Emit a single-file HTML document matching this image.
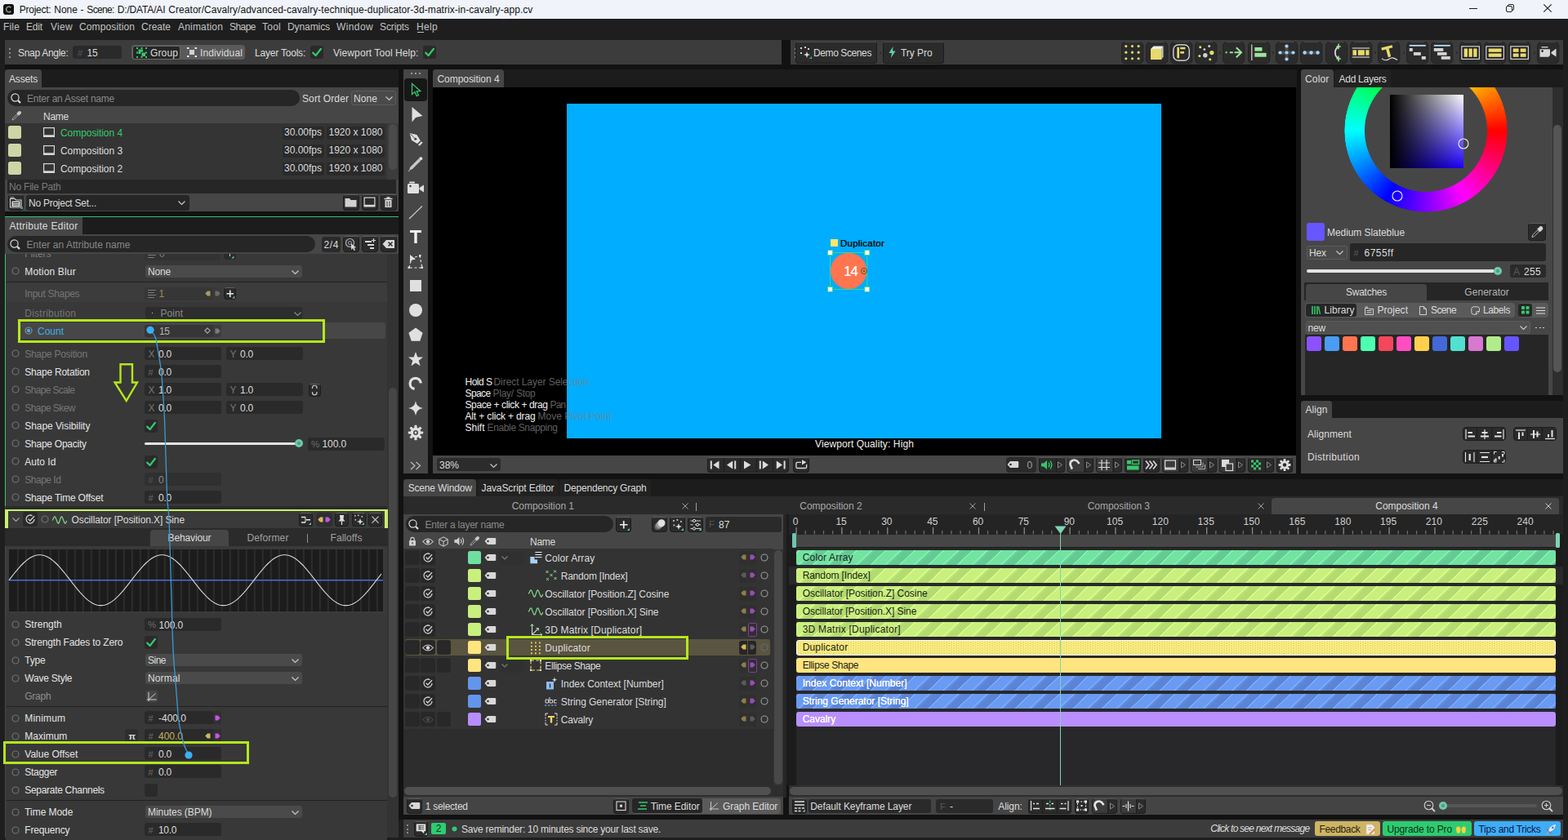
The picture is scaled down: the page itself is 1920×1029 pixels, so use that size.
<!DOCTYPE html>
<html lang="en"><head><meta charset="utf-8"><title>Cavalry</title>
<style>
html,body{margin:0;padding:0;}
body{width:1920px;height:1029px;overflow:hidden;background:#1e1e1e;font-family:"Liberation Sans",sans-serif;position:relative;}
div,svg{position:absolute;}
svg{overflow:visible;}
</style></head>
<body>
<div style="left:0px;top:0px;width:1920px;height:23px;background:#f0f3f9;"></div>
<div style="left:4px;top:5px;width:13px;height:13px;background:#111;border-radius:3px;"></div>
<svg style="left:4px;top:5px;" width="13" height="13" viewBox="0 0 13 13"><path d="M9.3 4.2 A3.3 3.3 0 1 0 9.3 8.8" fill="none" stroke="#aaa" stroke-width="1.3"/></svg>
<div style="left:0;top:0;width:700px;height:23px;">
<div style="left:23.8px;top:3.5px;height:16px;line-height:16px;font-size:12px;color:#111;white-space:nowrap;letter-spacing:-0.272px;">Project:</div>
<div style="left:66.3px;top:3.5px;height:16px;line-height:16px;font-size:12px;color:#111;white-space:nowrap;letter-spacing:-0.046px;">None</div>
<div style="left:98.4px;top:3.5px;height:16px;line-height:16px;font-size:12px;color:#111;white-space:nowrap;">-</div>
<div style="left:106.3px;top:3.5px;height:16px;line-height:16px;font-size:12px;color:#111;white-space:nowrap;letter-spacing:-0.643px;">Scene:</div>
<div style="left:143.8px;top:3.5px;height:16px;line-height:16px;font-size:12px;color:#111;white-space:nowrap;letter-spacing:-0.173px;">D:/DATA/AI</div>
<div style="left:206.3px;top:3.5px;height:16px;line-height:16px;font-size:12px;color:#111;white-space:nowrap;letter-spacing:0.048px;">Creator/Cavalry/advanced-cavalry-technique-duplicator-3d-matrix-in-cavalry-app.cv</div>
</div>
<svg style="left:1799px;top:10px;" width="10" height="1" viewBox="0 0 10 1"><rect x="0" y="0" width="10" height="1" fill="#1a1a1a"/></svg>
<svg style="left:1844px;top:5px;" width="10" height="10" viewBox="0 0 10 10"><rect x="0.5" y="2.5" width="7" height="7" rx="1.5" fill="none" stroke="#222" stroke-width="1"/><path d="M2.5 2.5 V2 A1.5 1.5 0 0 1 4 0.5 H8 A1.5 1.5 0 0 1 9.5 2 V6 A1.5 1.5 0 0 1 8 7.5 H7.5" fill="none" stroke="#222" stroke-width="1"/></svg>
<svg style="left:1890px;top:5px;" width="10" height="10" viewBox="0 0 10 10"><path d="M0.3 0.3 L9.7 9.7 M9.7 0.3 L0.3 9.7" stroke="#1a1a1a" stroke-width="1.1" fill="none"/></svg>
<div style="left:0px;top:23px;width:1920px;height:20px;background:#1e1e1e;"></div>
<div style="left:4px;top:25px;height:16px;line-height:16px;font-size:12px;color:#c4c4c4;white-space:nowrap;letter-spacing:0.166px;">File</div>
<div style="left:32px;top:25px;height:16px;line-height:16px;font-size:12px;color:#c4c4c4;white-space:nowrap;letter-spacing:-0.169px;">Edit</div>
<div style="left:62px;top:25px;height:16px;line-height:16px;font-size:12px;color:#c4c4c4;white-space:nowrap;letter-spacing:0.302px;">View</div>
<div style="left:97px;top:25px;height:16px;line-height:16px;font-size:12px;color:#c4c4c4;white-space:nowrap;letter-spacing:0.119px;">Composition</div>
<div style="left:173px;top:25px;height:16px;line-height:16px;font-size:12px;color:#c4c4c4;white-space:nowrap;letter-spacing:-0.003px;">Create</div>
<div style="left:218px;top:25px;height:16px;line-height:16px;font-size:12px;color:#c4c4c4;white-space:nowrap;letter-spacing:0.182px;">Animation</div>
<div style="left:281px;top:25px;height:16px;line-height:16px;font-size:12px;color:#c4c4c4;white-space:nowrap;letter-spacing:-0.539px;">Shape</div>
<div style="left:321px;top:25px;height:16px;line-height:16px;font-size:12px;color:#c4c4c4;white-space:nowrap;letter-spacing:0.247px;">Tool</div>
<div style="left:352px;top:25px;height:16px;line-height:16px;font-size:12px;color:#c4c4c4;white-space:nowrap;letter-spacing:-0.084px;">Dynamics</div>
<div style="left:412px;top:25px;height:16px;line-height:16px;font-size:12px;color:#c4c4c4;white-space:nowrap;letter-spacing:0.387px;">Window</div>
<div style="left:465px;top:25px;height:16px;line-height:16px;font-size:12px;color:#c4c4c4;white-space:nowrap;letter-spacing:-0.096px;">Scripts</div>
<div style="left:510px;top:25px;height:16px;line-height:16px;font-size:12px;color:#c4c4c4;white-space:nowrap;letter-spacing:0.330px;">Help</div>
<div style="left:510.5px;top:39.3px;width:8px;height:1px;background:#c4c4c4;"></div>
<div style="left:0px;top:43px;width:1920px;height:6px;background:#1e1e1e;"></div>
<div style="left:957px;top:49px;width:11px;height:30px;background:#121212;"></div>
<div style="left:6px;top:49px;width:951px;height:30px;background:#3c3c3c;"></div>
<div style="left:968px;top:49px;width:946px;height:30px;background:#3c3c3c;"></div>
<div style="left:6px;top:79px;width:1908px;height:925px;background:#121212;"></div>
<div style="left:6px;top:85px;width:482px;height:22px;background:#1c1c1c;"></div>
<div style="left:530px;top:85px;width:1057.5px;height:22px;background:#1c1c1c;"></div>
<div style="left:1593px;top:85px;width:321px;height:22px;background:#1c1c1c;"></div>
<div style="left:6px;top:266px;width:482px;height:21px;background:#1c1c1c;"></div>
<div style="left:1593px;top:490.5px;width:321px;height:21.5px;background:#1c1c1c;"></div>
<div style="left:494px;top:586.5px;width:1420px;height:21.5px;background:#1c1c1c;"></div>
<div style="left:10.5px;top:59px;width:2px;height:2px;background:#8a8a8a;"></div>
<div style="left:973px;top:58.5px;width:2px;height:2px;background:#8a8a8a;"></div>
<div style="left:10.5px;top:64px;width:2px;height:2px;background:#8a8a8a;"></div>
<div style="left:973px;top:63.5px;width:2px;height:2px;background:#8a8a8a;"></div>
<div style="left:10.5px;top:69px;width:2px;height:2px;background:#8a8a8a;"></div>
<div style="left:973px;top:68.5px;width:2px;height:2px;background:#8a8a8a;"></div>
<div style="left:22px;top:56.5px;height:16px;line-height:16px;font-size:12px;color:#dcdcdc;white-space:nowrap;letter-spacing:-0.293px;">Snap Angle:</div>
<div style="left:89px;top:56px;width:60px;height:16px;background:#2a2a2a;border-radius:3px;"></div>
<div style="left:95px;top:57.5px;height:14px;line-height:14px;font-size:11px;color:#5a5a5a;white-space:nowrap;">#</div>
<div style="left:106.5px;top:56.5px;height:16px;line-height:16px;font-size:12px;color:#dcdcdc;white-space:nowrap;letter-spacing:-0.173px;">15</div>
<div style="left:161px;top:55px;width:139px;height:18px;background:#5a5a5a;border-radius:4px;"></div>
<div style="left:161.5px;top:55.5px;width:59px;height:17px;background:#262626;border-radius:3px;border:1px solid #6a6a6a;box-sizing:border-box;"></div>
<svg style="left:167px;top:58px;" width="13" height="13" viewBox="0 0 13 13"><rect x="2.5" y="2.5" width="5.5" height="5.5" fill="#35c96b"/><rect x="6" y="6" width="5.5" height="5.5" fill="#35c96b" stroke="#262626" stroke-width="1"/><g fill="#35c96b"><rect x="0" y="0" width="2" height="2"/><rect x="5.5" y="0" width="2" height="2"/><rect x="11" y="0" width="2" height="2"/><rect x="0" y="11" width="2" height="2"/><rect x="5.5" y="11" width="2" height="2"/><rect x="11" y="11" width="2" height="2"/><rect x="0" y="5.5" width="2" height="2"/><rect x="11" y="5.5" width="2" height="2"/></g></svg>
<div style="left:184px;top:56.5px;height:16px;line-height:16px;font-size:12px;color:#dcdcdc;white-space:nowrap;letter-spacing:0.130px;">Group</div>
<svg style="left:229px;top:58px;" width="12" height="12" viewBox="0 0 12 12"><rect x="3" y="3" width="6" height="6" fill="#d0d0d0"/><g fill="#e8e8e8"><rect x="0" y="0" width="2.5" height="2"/><rect x="9.5" y="0" width="2.5" height="2"/><rect x="0" y="10" width="2.5" height="2"/><rect x="9.5" y="10" width="2.5" height="2"/></g></svg>
<div style="left:245px;top:56.5px;height:16px;line-height:16px;font-size:12px;color:#dcdcdc;white-space:nowrap;letter-spacing:0.130px;">Individual</div>
<div style="left:312px;top:56.5px;height:16px;line-height:16px;font-size:12px;color:#dcdcdc;white-space:nowrap;letter-spacing:-0.206px;">Layer Tools:</div>
<div style="left:380px;top:56px;width:16px;height:16px;background:#2a2a2a;border-radius:3px;"></div>
<svg style="left:380px;top:56px;" width="16" height="16" viewBox="0 0 16 16"><path d="M3.2 8.6 L6.6 12 L13 3.8" fill="none" stroke="#35c96b" stroke-width="2.2" stroke-linecap="round" stroke-linejoin="round"/></svg>
<div style="left:408px;top:56.5px;height:16px;line-height:16px;font-size:12px;color:#dcdcdc;white-space:nowrap;letter-spacing:0.082px;">Viewport Tool Help:</div>
<div style="left:518px;top:56px;width:16px;height:16px;background:#2a2a2a;border-radius:3px;"></div>
<svg style="left:518px;top:56px;" width="16" height="16" viewBox="0 0 16 16"><path d="M3.2 8.6 L6.6 12 L13 3.8" fill="none" stroke="#35c96b" stroke-width="2.2" stroke-linecap="round" stroke-linejoin="round"/></svg>
<div style="left:974px;top:51px;width:100px;height:27px;background:#2b2b2b;border-radius:4px;border:1px solid #1c1c1c;box-sizing:border-box;border-top-color:#4a4a4a;"></div>
<svg style="left:979px;top:57px;" width="15" height="15" viewBox="0 0 15 15"><path d="M9 6 L10 9 L13 10 L10 11 L9 14 L8 11 L5 10 L8 9 Z" fill="#e0e0e0"/><g fill="#d0d0d0"><rect x="1" y="1" width="2" height="2"/><rect x="6" y="0" width="2" height="2"/><rect x="10" y="2" width="2" height="2"/><rect x="1" y="7" width="2" height="2"/></g><path d="M15 12 V15 H12 Z" fill="#35c96b"/></svg>
<div style="left:996px;top:56.5px;height:16px;line-height:16px;font-size:12px;color:#dcdcdc;white-space:nowrap;letter-spacing:-0.397px;">Demo Scenes</div>
<div style="left:1077px;top:63.5px;width:2px;height:2px;background:#2a2a2a;"></div>
<div style="left:1081px;top:51px;width:75px;height:27px;background:#2b2b2b;border-radius:4px;border:1px solid #1c1c1c;box-sizing:border-box;border-top-color:#4a4a4a;"></div>
<svg style="left:1088px;top:57px;" width="9" height="14" viewBox="0 0 9 14"><path d="M5.5 0 L0.5 8 H4 L3 14 L8.5 5.5 H5 Z" fill="#62d3a4"/></svg>
<div style="left:1103px;top:56.5px;height:16px;line-height:16px;font-size:12px;color:#dcdcdc;white-space:nowrap;letter-spacing:-0.055px;">Try Pro</div>
<svg style="left:1372.5px;top:50.5px;" width="27" height="27" viewBox="0 0 27 27"><rect x="0.5" y="0.5" width="26.3" height="26.3" rx="4.5" fill="#2b2b2b" stroke="#232323" stroke-width="1"/><path d="M4.5 0.6 H22.5" stroke="#4a4a4a" stroke-width="1"/><circle cx="5.8" cy="5.6" r="1.55" fill="#e8d96c"/><circle cx="5.8" cy="13.149999999999999" r="1.55" fill="#e8d96c"/><circle cx="5.8" cy="20.7" r="1.55" fill="#e8d96c"/><circle cx="13.45" cy="5.6" r="1.55" fill="#e8d96c"/><circle cx="13.45" cy="13.149999999999999" r="1.55" fill="#e8d96c"/><circle cx="13.45" cy="20.7" r="1.55" fill="#e8d96c"/><circle cx="21.1" cy="5.6" r="1.55" fill="#e8d96c"/><circle cx="21.1" cy="13.149999999999999" r="1.55" fill="#e8d96c"/><circle cx="21.1" cy="20.7" r="1.55" fill="#e8d96c"/></svg>
<svg style="left:1402.5px;top:50.5px;" width="27" height="27" viewBox="0 0 27 27"><rect x="0.5" y="0.5" width="26.3" height="26.3" rx="4.5" fill="#2b2b2b" stroke="#232323" stroke-width="1"/><path d="M4.5 0.6 H22.5" stroke="#4a4a4a" stroke-width="1"/><path d="M6 9 L9.5 5.5 H21.5 L19.2 9 Z" fill="#ececec"/><path d="M19.2 9 L21.5 5.5 V18.5 L19.2 22 Z" fill="#c4c4c4"/><rect x="6" y="9" width="13.2" height="13" fill="#e8d96c"/></svg>
<svg style="left:1432.5px;top:50.5px;" width="27" height="27" viewBox="0 0 27 27"><rect x="0.5" y="0.5" width="26.3" height="26.3" rx="4.5" fill="#2b2b2b" stroke="#232323" stroke-width="1"/><path d="M4.5 0.6 H22.5" stroke="#4a4a4a" stroke-width="1"/><rect x="3.8" y="3.8" width="19.4" height="19.4" rx="6" fill="none" stroke="#ececec" stroke-width="1.2"/><rect x="8.3" y="6.8" width="2.7" height="13.4" fill="#e8d96c"/><rect x="12.2" y="6.8" width="6.2" height="2.5" fill="#e8d96c"/><rect x="12.2" y="12" width="4.8" height="2.6" fill="#e8d96c"/></svg>
<svg style="left:1462.5px;top:50.5px;" width="27" height="27" viewBox="0 0 27 27"><rect x="0.5" y="0.5" width="26.3" height="26.3" rx="4.5" fill="#2b2b2b" stroke="#232323" stroke-width="1"/><path d="M4.5 0.6 H22.5" stroke="#4a4a4a" stroke-width="1"/><circle cx="6.7" cy="6.7" r="1.5" fill="#e8d96c"/><circle cx="17.6" cy="5.6" r="1.5" fill="#d0d0d0"/><circle cx="11.8" cy="9.6" r="1.4" fill="#d0d0d0"/><circle cx="20.8" cy="13.6" r="2.6" fill="#e8d96c"/><circle cx="12.8" cy="16.8" r="2.7" fill="#d0d0d0"/><circle cx="5.8" cy="17.6" r="1.5" fill="#e8d96c"/><circle cx="18.7" cy="21.7" r="1.5" fill="#e8d96c"/></svg>
<svg style="left:1497px;top:50.5px;" width="27" height="27" viewBox="0 0 27 27"><rect x="0.5" y="0.5" width="26.3" height="26.3" rx="4.5" fill="#2b2b2b" stroke="#232323" stroke-width="1"/><path d="M4.5 0.6 H22.5" stroke="#4a4a4a" stroke-width="1"/><path d="M3.6 13.3 H5.6 M8.8 13.3 H12.8 M14.6 13.3 H22.5" fill="none" stroke="#9fe49a" stroke-width="2"/><path d="M16.8 7.3 L23 13.3 L16.8 19.3" fill="none" stroke="#9fe49a" stroke-width="2"/></svg>
<svg style="left:1527.5px;top:50.5px;" width="27" height="27" viewBox="0 0 27 27"><rect x="0.5" y="0.5" width="26.3" height="26.3" rx="4.5" fill="#2b2b2b" stroke="#232323" stroke-width="1"/><path d="M4.5 0.6 H22.5" stroke="#4a4a4a" stroke-width="1"/><path d="M4.8 3.5 V23" stroke="#e8e8e8" stroke-width="1.1"/><rect x="8.3" y="7" width="9.2" height="4.6" fill="#9fe49a"/><rect x="8.3" y="13.8" width="14.3" height="4.9" fill="#9fe49a"/></svg>
<svg style="left:1562px;top:50.5px;" width="27" height="27" viewBox="0 0 27 27"><rect x="0.5" y="0.5" width="26.3" height="26.3" rx="4.5" fill="#2b2b2b" stroke="#232323" stroke-width="1"/><path d="M4.5 0.6 H22.5" stroke="#4a4a4a" stroke-width="1"/><path d="M13.5 5.5 V21.5 M5.5 13.5 H21.5" stroke="#4c4c4c" stroke-width="4" stroke-linecap="round"/><circle cx="13.5" cy="5.5" r="2.1" fill="#a4d4ff"/><circle cx="13.5" cy="21.5" r="2.1" fill="#a4d4ff"/><circle cx="5.5" cy="13.5" r="2.1" fill="#a4d4ff"/><circle cx="21.5" cy="13.5" r="2.1" fill="#a4d4ff"/><circle cx="13.5" cy="13.5" r="2.1" fill="#a4d4ff"/></svg>
<svg style="left:1592px;top:50.5px;" width="27" height="27" viewBox="0 0 27 27"><rect x="0.5" y="0.5" width="26.3" height="26.3" rx="4.5" fill="#2b2b2b" stroke="#232323" stroke-width="1"/><path d="M4.5 0.6 H22.5" stroke="#4a4a4a" stroke-width="1"/><path d="M5.5 13.5 H21.5" stroke="#4c4c4c" stroke-width="4" stroke-linecap="round"/><circle cx="5.6" cy="13.5" r="2.2" fill="#a4d4ff"/><circle cx="13.5" cy="13.5" r="2.2" fill="#a4d4ff"/><circle cx="21.6" cy="13.5" r="2.2" fill="#a4d4ff"/></svg>
<svg style="left:1622.5px;top:50.5px;" width="27" height="27" viewBox="0 0 27 27"><rect x="0.5" y="0.5" width="26.3" height="26.3" rx="4.5" fill="#2b2b2b" stroke="#232323" stroke-width="1"/><path d="M4.5 0.6 H22.5" stroke="#4a4a4a" stroke-width="1"/><path d="M16.5 6 A8.4 8.4 0 0 0 16.5 21" fill="none" stroke="#e0e0e0" stroke-width="1.7"/><path d="M16 2.6 V9.2 M13.4 5.9 H18.8 M16 17.6 V24.2 M13.4 20.9 H18.8" stroke="#9fe49a" stroke-width="1.5"/></svg>
<svg style="left:1652.5px;top:50.5px;" width="27" height="27" viewBox="0 0 27 27"><rect x="0.5" y="0.5" width="26.3" height="26.3" rx="4.5" fill="#2b2b2b" stroke="#232323" stroke-width="1"/><path d="M4.5 0.6 H22.5" stroke="#4a4a4a" stroke-width="1"/><path d="M2.8 8 H24 M2.8 19 H24" stroke="#f0f0f0" stroke-width="1"/><rect x="3.4" y="10.3" width="4.6" height="6.4" fill="#e8d96c"/><rect x="9.8" y="10.3" width="8" height="6.4" fill="#e8d96c"/><rect x="19.3" y="10.3" width="4.2" height="6.4" fill="#e8d96c"/></svg>
<svg style="left:1687px;top:50.5px;" width="27" height="27" viewBox="0 0 27 27"><rect x="0.5" y="0.5" width="26.3" height="26.3" rx="4.5" fill="#2b2b2b" stroke="#232323" stroke-width="1"/><path d="M4.5 0.6 H22.5" stroke="#4a4a4a" stroke-width="1"/><path d="M4.3 7.6 L17.6 4.2 L18.4 7.2 L13.6 8.5 L16.2 18.3 L12.8 19.2 L10.2 9.4 L5.1 10.7 Z" fill="#e8d96c"/><path d="M5 20.6 Q9.5 24.5 14 21.2 T24 22.5" fill="none" stroke="#e0e0e0" stroke-width="1.1"/></svg>
<svg style="left:1722px;top:50.5px;" width="27" height="27" viewBox="0 0 27 27"><rect x="0.5" y="0.5" width="26.3" height="26.3" rx="4.5" fill="#2b2b2b" stroke="#232323" stroke-width="1"/><path d="M4.5 0.6 H22.5" stroke="#4a4a4a" stroke-width="1"/><path d="M3.8 4.8 H23.8" stroke="#b4e0ff" stroke-width="1.8"/><rect x="3.8" y="8" width="4" height="3.8" fill="#d4d4d4"/><rect x="9" y="13" width="8.8" height="3.8" fill="#d4d4d4"/><rect x="18.8" y="18" width="5" height="3.8" fill="#d4d4d4"/></svg>
<svg style="left:1752px;top:50.5px;" width="27" height="27" viewBox="0 0 27 27"><rect x="0.5" y="0.5" width="26.3" height="26.3" rx="4.5" fill="#2b2b2b" stroke="#232323" stroke-width="1"/><path d="M4.5 0.6 H22.5" stroke="#4a4a4a" stroke-width="1"/><path d="M3.8 4.8 H23.8" stroke="#b4e0ff" stroke-width="1.8"/><rect x="3.8" y="8" width="11.5" height="3.8" fill="#d4d4d4"/><rect x="8" y="13" width="11.5" height="3.8" fill="#d4d4d4"/><rect x="12.8" y="18" width="11" height="3.8" fill="#d4d4d4"/></svg>
<svg style="left:1787px;top:50.5px;" width="27" height="27" viewBox="0 0 27 27"><rect x="0.5" y="0.5" width="26.3" height="26.3" rx="4.5" fill="#2b2b2b" stroke="#232323" stroke-width="1"/><path d="M4.5 0.6 H22.5" stroke="#4a4a4a" stroke-width="1"/><rect x="2.9" y="5.9" width="21.4" height="15.4" fill="#17171f" stroke="#ececec" stroke-width="1.1"/><rect x="5.6" y="8.4" width="4.4" height="10.4" fill="#e8d96c"/><rect x="11.4" y="8.4" width="4.4" height="10.4" fill="#e8d96c"/><rect x="17.2" y="8.4" width="4.4" height="10.4" fill="#e8d96c"/></svg>
<svg style="left:1817px;top:50.5px;" width="27" height="27" viewBox="0 0 27 27"><rect x="0.5" y="0.5" width="26.3" height="26.3" rx="4.5" fill="#2b2b2b" stroke="#232323" stroke-width="1"/><path d="M4.5 0.6 H22.5" stroke="#4a4a4a" stroke-width="1"/><rect x="2.9" y="5.9" width="21.4" height="15.4" fill="#17171f" stroke="#ececec" stroke-width="1.1"/><rect x="5.6" y="8.4" width="16" height="4.4" fill="#e8d96c"/><rect x="5.6" y="14.4" width="16" height="4.4" fill="#e8d96c"/></svg>
<svg style="left:1847px;top:50.5px;" width="27" height="27" viewBox="0 0 27 27"><rect x="0.5" y="0.5" width="26.3" height="26.3" rx="4.5" fill="#2b2b2b" stroke="#232323" stroke-width="1"/><path d="M4.5 0.6 H22.5" stroke="#4a4a4a" stroke-width="1"/><rect x="2.9" y="5.9" width="21.4" height="15.4" fill="#17171f" stroke="#ececec" stroke-width="1.1"/><rect x="5.6" y="8.4" width="7" height="4.4" fill="#e8d96c"/><rect x="14.6" y="8.4" width="7" height="4.4" fill="#e8d96c"/><rect x="5.6" y="14.4" width="7" height="4.4" fill="#e8d96c"/><rect x="14.6" y="14.4" width="7" height="4.4" fill="#e8d96c"/></svg>
<svg style="left:1882px;top:50.5px;" width="27" height="27" viewBox="0 0 27 27"><rect x="0.5" y="0.5" width="26.3" height="26.3" rx="4.5" fill="#2b2b2b" stroke="#232323" stroke-width="1"/><path d="M4.5 0.6 H22.5" stroke="#4a4a4a" stroke-width="1"/><path d="M3.5 9.2 H16 V16.5 L14.2 18.8 H3.5 Z" fill="#d6d6d6"/><rect x="5.5" y="6.2" width="8" height="1.2" fill="#e8e8e8"/><path d="M17.5 13 L23.5 8.5 V18.5 L17.5 14.6 Z" fill="#d6d6d6"/><circle cx="6.6" cy="11.6" r="1.3" fill="#222"/></svg>
<div style="left:1493.1px;top:63.2px;width:2.4px;height:2.4px;background:#2a2a2a;border-radius:1.2px;"></div>
<div style="left:1558px;top:63.2px;width:2.4px;height:2.4px;background:#2a2a2a;border-radius:1.2px;"></div>
<div style="left:1682.9px;top:63.2px;width:2.4px;height:2.4px;background:#2a2a2a;border-radius:1.2px;"></div>
<div style="left:1717.7px;top:63.2px;width:2.4px;height:2.4px;background:#2a2a2a;border-radius:1.2px;"></div>
<div style="left:1782.7px;top:63.2px;width:2.4px;height:2.4px;background:#2a2a2a;border-radius:1.2px;"></div>
<div style="left:1877.9px;top:63.2px;width:2.4px;height:2.4px;background:#2a2a2a;border-radius:1.2px;"></div>
<div style="left:6px;top:85px;width:45px;height:22px;background:#464646;border-radius:4px 4px 0 0;"></div>
<div style="left:11px;top:89px;height:16px;line-height:16px;font-size:12px;color:#dcdcdc;white-space:nowrap;letter-spacing:-0.169px;">Assets</div>
<div style="left:6px;top:107px;width:482px;height:152px;background:#464646;"></div>
<div style="left:9px;top:110px;width:358px;height:20px;background:#262626;border-radius:10px;"></div>
<svg style="left:12.5px;top:113.5px;" width="14" height="14" viewBox="0 0 14 14"><circle cx="5.5" cy="5.5" r="4.6" fill="none" stroke="#d8d8d8" stroke-width="1.2"/><path d="M9.6 9.6 L11.4 11.4" stroke="#d8d8d8" stroke-width="2.2" stroke-linecap="round"/></svg>
<div style="left:33px;top:112.5px;height:16px;line-height:16px;font-size:12px;color:#888;white-space:nowrap;letter-spacing:-0.231px;">Enter an Asset name</div>
<div style="left:370px;top:113px;height:16px;line-height:16px;font-size:12px;color:#dcdcdc;white-space:nowrap;letter-spacing:0.099px;">Sort Order</div>
<div style="left:430px;top:111px;width:55px;height:18px;background:#4a4a4a;border-radius:3px;border:1px solid #5c5c5c;box-sizing:border-box;"></div>
<div style="left:433px;top:112.5px;height:16px;line-height:16px;font-size:12px;color:#dcdcdc;white-space:nowrap;letter-spacing:0.079px;">None</div>
<svg style="left:471.5px;top:118px;" width="9" height="5" viewBox="0 0 9 5"><path d="M0.5 0.5 L4.5 4.5 L8.5 0.5" fill="none" stroke="#c8c8c8" stroke-width="1.2"/></svg>
<div style="left:6px;top:131px;width:482px;height:20px;background:#464646;"></div>
<svg style="left:14px;top:136px;" width="12" height="12" viewBox="0 0 12 12"><path d="M1 11 L1.6 9 L6.5 4.1 L7.9 5.5 L3 10.4 Z" fill="none" stroke="#a8a8a8" stroke-width="1"/><path d="M6.2 3 L9 5.8 L10 4.8 L11.4 3.4 A1.7 1.7 0 0 0 8.6 0.6 L7.2 2 Z" fill="#c8c8c8"/></svg>
<div style="left:53px;top:135px;height:16px;line-height:16px;font-size:12px;color:#dcdcdc;white-space:nowrap;letter-spacing:-0.252px;">Name</div>
<div style="left:6px;top:151px;width:468px;height:69px;background:#343434;"></div>
<div style="left:10px;top:154px;width:16px;height:16px;background:#cdd6a4;border-radius:2.5px;"></div>
<svg style="left:53px;top:156px;" width="14" height="12" viewBox="0 0 14 12"><rect x="0.6" y="0.6" width="12.8" height="9.3" fill="none" stroke="#d8d8d8" stroke-width="1.2"/><rect x="0" y="10" width="14" height="2" fill="#d8d8d8"/></svg>
<div style="left:74px;top:154.5px;height:16px;line-height:16px;font-size:12px;color:#35c96b;white-space:nowrap;letter-spacing:-0.054px;">Composition 4</div>
<div style="left:346px;top:154.5px;width:51px;height:16px;background:#2a2a2a;border-radius:3px;"></div>
<div style="left:348px;top:154px;height:16px;line-height:16px;font-size:12px;color:#dcdcdc;white-space:nowrap;letter-spacing:-0.004px;">30.00fps</div>
<div style="left:399.5px;top:154.5px;width:71.5px;height:16px;background:#2a2a2a;border-radius:3px;"></div>
<div style="left:402.5px;top:154px;height:16px;line-height:16px;font-size:12px;color:#dcdcdc;white-space:nowrap;letter-spacing:-0.005px;">1920 x 1080</div>
<div style="left:10px;top:176px;width:16px;height:16px;background:#cdd6a4;border-radius:2.5px;"></div>
<svg style="left:53px;top:178px;" width="14" height="12" viewBox="0 0 14 12"><rect x="0.6" y="0.6" width="12.8" height="9.3" fill="none" stroke="#d8d8d8" stroke-width="1.2"/><rect x="0" y="10" width="14" height="2" fill="#d8d8d8"/></svg>
<div style="left:74px;top:176.5px;height:16px;line-height:16px;font-size:12px;color:#dcdcdc;white-space:nowrap;letter-spacing:-0.054px;">Composition 3</div>
<div style="left:346px;top:176.5px;width:51px;height:16px;background:#2a2a2a;border-radius:3px;"></div>
<div style="left:348px;top:176px;height:16px;line-height:16px;font-size:12px;color:#dcdcdc;white-space:nowrap;letter-spacing:-0.004px;">30.00fps</div>
<div style="left:399.5px;top:176.5px;width:71.5px;height:16px;background:#2a2a2a;border-radius:3px;"></div>
<div style="left:402.5px;top:176px;height:16px;line-height:16px;font-size:12px;color:#dcdcdc;white-space:nowrap;letter-spacing:-0.005px;">1920 x 1080</div>
<div style="left:10px;top:198px;width:16px;height:16px;background:#cdd6a4;border-radius:2.5px;"></div>
<svg style="left:53px;top:200px;" width="14" height="12" viewBox="0 0 14 12"><rect x="0.6" y="0.6" width="12.8" height="9.3" fill="none" stroke="#d8d8d8" stroke-width="1.2"/><rect x="0" y="10" width="14" height="2" fill="#d8d8d8"/></svg>
<div style="left:74px;top:198.5px;height:16px;line-height:16px;font-size:12px;color:#dcdcdc;white-space:nowrap;letter-spacing:-0.054px;">Composition 2</div>
<div style="left:346px;top:198.5px;width:51px;height:16px;background:#2a2a2a;border-radius:3px;"></div>
<div style="left:348px;top:198px;height:16px;line-height:16px;font-size:12px;color:#dcdcdc;white-space:nowrap;letter-spacing:-0.004px;">30.00fps</div>
<div style="left:399.5px;top:198.5px;width:71.5px;height:16px;background:#2a2a2a;border-radius:3px;"></div>
<div style="left:402.5px;top:198px;height:16px;line-height:16px;font-size:12px;color:#dcdcdc;white-space:nowrap;letter-spacing:-0.005px;">1920 x 1080</div>
<div style="left:474px;top:151px;width:14px;height:69px;background:#3c3c3c;"></div>
<div style="left:476px;top:152px;width:10px;height:56px;background:#4b4b4b;border-radius:5px;"></div>
<div style="left:9px;top:220px;width:476px;height:16.5px;background:#262626;"></div>
<div style="left:11px;top:220.5px;height:16px;line-height:16px;font-size:12px;color:#7c7c7c;white-space:nowrap;letter-spacing:-0.211px;">No File Path</div>
<div style="left:9.5px;top:238px;width:19.5px;height:20px;background:#2b2b2b;border-radius:4px;border:1px solid #1d1d1d;box-sizing:border-box;border-top-color:#5e5e5e;"></div>
<svg style="left:9.5px;top:238px;" width="19.5" height="20" viewBox="0 0 19.5 20"><path d="M2.5 5.5 H8 L9.5 7 H16 V16 H2.5 Z M2.5 4 H7.5" fill="none" stroke="#d8d8d8" stroke-width="1.1"/><rect x="4.5" y="8.5" width="10" height="6.5" fill="#d8d8d8"/><path d="M6 10.5 H13 M6 13 H13" stroke="#2b2b2b" stroke-width="1"/><path d="M18 15 V18 H15 Z" fill="#35c96b"/></svg>
<div style="left:32px;top:239px;width:200px;height:18.5px;background:#262626;border-radius:3px;"></div>
<div style="left:35px;top:240.5px;height:16px;line-height:16px;font-size:12px;color:#dcdcdc;white-space:nowrap;letter-spacing:-0.257px;">No Project Set...</div>
<svg style="left:218px;top:246px;" width="9" height="5" viewBox="0 0 9 5"><path d="M0.5 0.5 L4.5 4.5 L8.5 0.5" fill="none" stroke="#c8c8c8" stroke-width="1.2"/></svg>
<div style="left:420px;top:238px;width:20px;height:20px;background:#2b2b2b;border-radius:4px;border:1px solid #1d1d1d;box-sizing:border-box;border-top-color:#5e5e5e;"></div>
<svg style="left:420px;top:238px;" width="20" height="20" viewBox="0 0 20 20"><path d="M2.5 5 H8 L9.5 7 H16.5 V15.5 H2.5 Z" fill="#d0d0d0"/></svg>
<div style="left:443px;top:238px;width:20px;height:20px;background:#2b2b2b;border-radius:4px;border:1px solid #1d1d1d;box-sizing:border-box;border-top-color:#5e5e5e;"></div>
<svg style="left:443px;top:238px;" width="20" height="20" viewBox="0 0 20 20"><rect x="3.1" y="4.1" width="12.8" height="9.3" fill="none" stroke="#d8d8d8" stroke-width="1.2"/><rect x="2.5" y="13.5" width="14" height="2" fill="#d8d8d8"/></svg>
<div style="left:465.5px;top:238px;width:20px;height:20px;background:#2b2b2b;border-radius:4px;border:1px solid #1d1d1d;box-sizing:border-box;border-top-color:#5e5e5e;"></div>
<svg style="left:465.5px;top:238px;" width="20" height="20" viewBox="0 0 20 20"><path d="M4.5 5.5 H14.5 M7.5 4 H11.5" stroke="#d8d8d8" stroke-width="1.4" fill="none"/><path d="M5.5 7 H13.5 V16 H5.5 Z" fill="#d8d8d8"/><path d="M8 8.5 V15 M11 8.5 V15" stroke="#2b2b2b" stroke-width="1"/></svg>
<div style="left:494px;top:85px;width:30px;height:495px;background:#464646;"></div>
<div style="left:503px;top:89px;width:2px;height:2px;background:#9a9a9a;"></div>
<div style="left:508px;top:89px;width:2px;height:2px;background:#9a9a9a;"></div>
<div style="left:513px;top:89px;width:2px;height:2px;background:#9a9a9a;"></div>
<div style="left:495px;top:96px;width:28px;height:28px;background:#171717;border-radius:4px;"></div>
<svg style="left:499px;top:100px;" width="20" height="20" viewBox="0 0 20 20"><path d="M5.5 2.5 L5.5 15.5 L9 12.6 L11.2 17.6 L13.4 16.6 L11.2 11.8 L15.8 11.4 Z" fill="none" stroke="#35c96b" stroke-width="1.3" stroke-linejoin="miter"/></svg>
<svg style="left:499px;top:130px;" width="20" height="20" viewBox="0 0 20 20"><path d="M5.5 1 L5.5 19.5 L10 14 L18.5 12 Z" fill="#e0e0e0"/></svg>
<svg style="left:499px;top:160px;" width="20" height="20" viewBox="0 0 20 20"><path d="M2.5 3 L11.5 5.2 L15.8 12.2 L12 16 L5 11.8 Z" fill="#e0e0e0"/><path d="M3 3.5 L9.3 9.8" stroke="#464646" stroke-width="1"/><circle cx="9.8" cy="10.3" r="1.5" fill="#464646"/><path d="M13 17.2 L17 13.2 L18.6 14.8 L14.6 18.8 Z" fill="#e0e0e0"/></svg>
<svg style="left:499px;top:190px;" width="20" height="20" viewBox="0 0 20 20"><path d="M2 18.5 L3.3 14.7 L13.8 4.2 L16.3 6.7 L5.8 17.2 Z" fill="#c8c8c8"/><circle cx="16.3" cy="4.2" r="2" fill="#e0e0e0"/><path d="M1.2 19.5 L2.8 18.8" stroke="#e0e0e0" stroke-width="1"/></svg>
<svg style="left:498px;top:220px;" width="22" height="20" viewBox="0 0 22 20"><rect x="1" y="5" width="14" height="12" rx="1.5" fill="#e0e0e0"/><rect x="3" y="2.5" width="7" height="2" rx="1" fill="#e0e0e0"/><path d="M15.5 10 L21 6.5 V15.5 L15.5 12 Z" fill="#e0e0e0"/><circle cx="4.5" cy="8" r="1.2" fill="#333"/></svg>
<svg style="left:499px;top:250px;" width="20" height="20" viewBox="0 0 20 20"><path d="M2 18 L18 2.5" stroke="#c8c8c8" stroke-width="1.3"/></svg>
<svg style="left:499px;top:280px;" width="20" height="20" viewBox="0 0 20 20"><path d="M3 2 H17 V5 H11.7 V18 H8.3 V5 H3 Z" fill="#f0f0f0"/></svg>
<svg style="left:499px;top:310px;" width="20" height="20" viewBox="0 0 20 20"><path d="M3 2 L3 11 L5.8 8.6 L10 7.4 Z" fill="#e0e0e0"/><path d="M2 18 L5 6 L15 3.5 L18 18 Z" fill="none" stroke="#e0e0e0" stroke-width="1.2" stroke-dasharray="3 2.5"/><g fill="#e0e0e0"><rect x="0.5" y="16.5" width="2.5" height="2.5"/><rect x="16.5" y="16.5" width="2.5" height="2.5"/><rect x="14" y="2" width="2.5" height="2.5"/></g></svg>
<svg style="left:499px;top:340px;" width="20" height="20" viewBox="0 0 20 20"><rect x="3" y="3" width="14" height="14" fill="#e0e0e0"/></svg>
<svg style="left:499px;top:370px;" width="20" height="20" viewBox="0 0 20 20"><circle cx="10" cy="10" r="8" fill="#e0e0e0"/></svg>
<svg style="left:499px;top:400px;" width="20" height="20" viewBox="0 0 20 20"><path d="M10 1.5 L18.6 7.8 L15.3 17.8 H4.7 L1.4 7.8 Z" fill="#e0e0e0"/></svg>
<svg style="left:499px;top:430px;" width="20" height="20" viewBox="0 0 20 20"><path d="M10 1 L12.3 7.4 L19 7.6 L13.7 11.8 L15.6 18.3 L10 14.5 L4.4 18.3 L6.3 11.8 L1 7.6 L7.7 7.4 Z" fill="#e0e0e0"/></svg>
<svg style="left:499px;top:460px;" width="20" height="20" viewBox="0 0 20 20"><path d="M16.3 9.3 A6.6 6.6 0 1 0 8.6 16.4" fill="none" stroke="#e0e0e0" stroke-width="3.2" stroke-linecap="butt"/></svg>
<svg style="left:499px;top:490px;" width="20" height="20" viewBox="0 0 20 20"><path d="M10 1 Q11 9 19 10 Q11 11 10 19 Q9 11 1 10 Q9 9 10 1 Z" fill="#e0e0e0"/></svg>
<svg style="left:499px;top:520px;" width="20" height="20" viewBox="0 0 20 20"><rect x="8.4" y="0.8" width="3.2" height="4.5" rx="0.8" fill="#e0e0e0" transform="rotate(0 10 10)"/><rect x="8.4" y="0.8" width="3.2" height="4.5" rx="0.8" fill="#e0e0e0" transform="rotate(45 10 10)"/><rect x="8.4" y="0.8" width="3.2" height="4.5" rx="0.8" fill="#e0e0e0" transform="rotate(90 10 10)"/><rect x="8.4" y="0.8" width="3.2" height="4.5" rx="0.8" fill="#e0e0e0" transform="rotate(135 10 10)"/><rect x="8.4" y="0.8" width="3.2" height="4.5" rx="0.8" fill="#e0e0e0" transform="rotate(180 10 10)"/><rect x="8.4" y="0.8" width="3.2" height="4.5" rx="0.8" fill="#e0e0e0" transform="rotate(225 10 10)"/><rect x="8.4" y="0.8" width="3.2" height="4.5" rx="0.8" fill="#e0e0e0" transform="rotate(270 10 10)"/><rect x="8.4" y="0.8" width="3.2" height="4.5" rx="0.8" fill="#e0e0e0" transform="rotate(315 10 10)"/><circle cx="10" cy="10" r="6.2" fill="#e0e0e0"/><circle cx="10" cy="10" r="3" fill="#464646"/><circle cx="10" cy="10" r="1.4" fill="#e0e0e0"/></svg>
<svg style="left:502px;top:565px;" width="14" height="11" viewBox="0 0 14 11"><path d="M1 1 L6 5.5 L1 10 M7.5 1 L12.5 5.5 L7.5 10" fill="none" stroke="#c0c0c0" stroke-width="1.2"/></svg>
<div style="left:530px;top:85px;width:87px;height:22px;background:#464646;border-radius:4px 4px 0 0;"></div>
<div style="left:535.5px;top:89px;height:16px;line-height:16px;font-size:12px;color:#dcdcdc;white-space:nowrap;letter-spacing:-0.054px;">Composition 4</div>
<div style="left:530px;top:107px;width:1057.3px;height:473px;background:#000;"></div>
<div style="left:693.6px;top:127px;width:728.7px;height:410px;background:#00adff;"></div>
<div style="left:1017px;top:293px;width:9px;height:9px;background:#ffe569;"></div>
<div style="left:1029px;top:290.7px;height:15px;line-height:15px;font-size:11.5px;color:#0c0c0c;white-space:nowrap;letter-spacing:0.223px;text-shadow:0 0 0.5px #0c0c0c;">Duplicator</div>
<svg style="left:1010px;top:303px;" width="58" height="58" viewBox="0 0 58 58"><circle cx="29.2" cy="28.9" r="22.2" fill="#ff7550"/><rect x="6.5" y="6.5" width="45.3" height="44.9" fill="none" stroke="#3fd58a" stroke-width="1"/><rect x="3.5" y="3.5" width="6" height="6" fill="#fff" stroke="#3fd58a" stroke-width="1"/><rect x="48.8" y="3.5" width="6" height="6" fill="#fff" stroke="#3fd58a" stroke-width="1"/><rect x="3.5" y="48.4" width="6" height="6" fill="#fff" stroke="#3fd58a" stroke-width="1"/><rect x="48.8" y="48.4" width="6" height="6" fill="#fff" stroke="#3fd58a" stroke-width="1"/></svg>
<div style="left:1033.2px;top:321.5px;height:21px;line-height:21px;font-size:16.5px;color:#fff;white-space:nowrap;letter-spacing:-0.976px;text-shadow:0 0 0.4px #fff;">14</div>
<svg style="left:1053px;top:327px;" width="10" height="10" viewBox="0 0 10 10"><circle cx="5" cy="5" r="3.6" fill="none" stroke="#553" stroke-width="1"/><circle cx="5" cy="5" r="1" fill="#442"/></svg>
<div style="left:569.5px;top:459.5px;height:16px;line-height:16px;font-size:12px;color:#f0f0f0;white-space:nowrap;letter-spacing:-0.503px;">Hold S</div>
<div style="left:604.5px;top:459.5px;height:16px;line-height:16px;font-size:12px;color:rgba(128,128,128,0.75);white-space:nowrap;letter-spacing:-0.063px;">Direct Layer Selection</div>
<div style="left:569.5px;top:473.5px;height:16px;line-height:16px;font-size:12px;color:#f0f0f0;white-space:nowrap;letter-spacing:-0.605px;">Space</div>
<div style="left:603.5px;top:473.5px;height:16px;line-height:16px;font-size:12px;color:rgba(128,128,128,0.75);white-space:nowrap;letter-spacing:-0.270px;">Play/ Stop</div>
<div style="left:569.5px;top:487.5px;height:16px;line-height:16px;font-size:12px;color:#f0f0f0;white-space:nowrap;letter-spacing:-0.386px;">Space + click + drag</div>
<div style="left:673.5px;top:487.5px;height:16px;line-height:16px;font-size:12px;color:rgba(128,128,128,0.75);white-space:nowrap;letter-spacing:-0.784px;">Pan</div>
<div style="left:569.5px;top:501.5px;height:16px;line-height:16px;font-size:12px;color:#f0f0f0;white-space:nowrap;letter-spacing:-0.150px;">Alt + click + drag</div>
<div style="left:658.5px;top:501.5px;height:16px;line-height:16px;font-size:12px;color:rgba(128,128,128,0.75);white-space:nowrap;letter-spacing:-0.002px;">Move Pivot Point</div>
<div style="left:569.5px;top:515.5px;height:16px;line-height:16px;font-size:12px;color:#f0f0f0;white-space:nowrap;letter-spacing:-0.002px;">Shift</div>
<div style="left:596.5px;top:515.5px;height:16px;line-height:16px;font-size:12px;color:rgba(128,128,128,0.75);white-space:nowrap;letter-spacing:-0.360px;">Enable Snapping</div>
<div style="left:998px;top:535.5px;height:16px;line-height:16px;font-size:12px;color:#f0f0f0;white-space:nowrap;letter-spacing:0.114px;">Viewport Quality: High</div>
<div style="left:530px;top:558px;width:1057.3px;height:22px;background:#464646;"></div>
<div style="left:535px;top:561px;width:77.5px;height:16px;background:#2c2c2c;border-radius:3px;"></div>
<div style="left:538px;top:561.5px;height:16px;line-height:16px;font-size:12px;color:#dcdcdc;white-space:nowrap;letter-spacing:-0.006px;">38%</div>
<svg style="left:600px;top:567.5px;" width="9" height="5" viewBox="0 0 9 5"><path d="M0.5 0.5 L4.5 4.5 L8.5 0.5" fill="none" stroke="#c8c8c8" stroke-width="1.2"/></svg>
<div style="left:866px;top:559.5px;width:100px;height:19px;background:#2b2b2b;border-radius:4px;border:1px solid #1d1d1d;box-sizing:border-box;border-top-color:#5e5e5e;"></div>
<svg style="left:866px;top:559.5px;" width="19" height="19" viewBox="0 0 19 19"><rect x="3.8" y="4.5" width="2" height="10" fill="#dcdcdc"/><path d="M7.3 9.5 L14.5 4.5 V14.5 Z" fill="#dcdcdc"/></svg>
<svg style="left:886px;top:559.5px;" width="19" height="19" viewBox="0 0 19 19"><path d="M4 9.5 L11.2 4.5 V14.5 Z" fill="#dcdcdc"/><rect x="13.2" y="4.5" width="2" height="10" fill="#dcdcdc"/></svg>
<div style="left:885.5px;top:560.5px;width:1px;height:17px;background:#1d1d1d;"></div>
<svg style="left:906px;top:559.5px;" width="19" height="19" viewBox="0 0 19 19"><path d="M5 4.5 L13.5 9.5 L5 14.5 Z" fill="#dcdcdc"/></svg>
<div style="left:905.5px;top:560.5px;width:1px;height:17px;background:#1d1d1d;"></div>
<svg style="left:926px;top:559.5px;" width="19" height="19" viewBox="0 0 19 19"><rect x="3.8" y="4.5" width="2" height="10" fill="#dcdcdc"/><path d="M7.8 4.5 L15 9.5 L7.8 14.5 Z" fill="#dcdcdc"/></svg>
<div style="left:925.5px;top:560.5px;width:1px;height:17px;background:#1d1d1d;"></div>
<svg style="left:946px;top:559.5px;" width="19" height="19" viewBox="0 0 19 19"><rect x="13.6" y="4.5" width="2" height="10" fill="#dcdcdc"/><path d="M4.8 4.5 L12 9.5 L4.8 14.5 Z" fill="#dcdcdc"/></svg>
<div style="left:945.5px;top:560.5px;width:1px;height:17px;background:#1d1d1d;"></div>
<div style="left:971px;top:559.5px;width:20px;height:19px;background:#2b2b2b;border-radius:4px;border:1px solid #1d1d1d;box-sizing:border-box;border-top-color:#5e5e5e;"></div>
<svg style="left:971px;top:559.5px;" width="20" height="19" viewBox="0 0 20 19"><path d="M10 6.3 H5.5 A1.6 1.6 0 0 0 3.9 7.9 V11.9 A1.6 1.6 0 0 0 5.5 13.5 H15 A1.6 1.6 0 0 0 16.6 11.9 V9" fill="none" stroke="#dcdcdc" stroke-width="1.3"/><path d="M11 3.2 L16.3 6.3 L11 9.4 Z" fill="#dcdcdc"/></svg>
<div style="left:1232px;top:559.5px;width:37px;height:19px;background:#2b2b2b;border-radius:4px;"></div>
<svg style="left:1233px;top:563.5px;" width="15" height="10" viewBox="0 0 15 10"><path d="M0.5 5 L4 1 H13 A1.2 1.2 0 0 1 14.2 2.2 V7.8 A1.2 1.2 0 0 1 13 9 H4 Z" fill="#d8d8d8"/><circle cx="4.5" cy="5" r="1.3" fill="#2b2b2b"/></svg>
<div style="left:1257.5px;top:561.5px;height:16px;line-height:16px;font-size:12px;color:#a0a0a0;white-space:nowrap;">0</div>
<div style="left:1272px;top:559.5px;width:32px;height:19px;background:#2b2b2b;border-radius:4px;border:1px solid #1d1d1d;box-sizing:border-box;border-top-color:#5a5a5a;"></div>
<svg style="left:1272px;top:559.5px;" width="20" height="19" viewBox="0 0 20 19"><path d="M3 7.5 H6 L10 4 V15 L6 11.5 H3 Z" fill="#35c96b"/><path d="M12 6.5 Q14 9.5 12 12.5 M14 4.5 Q17.5 9.5 14 14.5" fill="none" stroke="#35c96b" stroke-width="1.3"/></svg>
<div style="left:1292.5px;top:560.5px;width:1px;height:17px;background:#1d1d1d;"></div>
<svg style="left:1294px;top:564.5px;" width="8" height="9" viewBox="0 0 8 9"><path d="M1.5 1 L6.5 4.5 L1.5 8 Z" fill="none" stroke="#8a8a8a" stroke-width="1"/></svg>
<div style="left:1307px;top:559.5px;width:32px;height:19px;background:#2b2b2b;border-radius:4px;border:1px solid #1d1d1d;box-sizing:border-box;border-top-color:#5a5a5a;"></div>
<div style="left:1308px;top:560.5px;width:19px;height:17px;background:#3b3b3b;border-radius:3px 0 0 3px;"></div>
<svg style="left:1307px;top:559.5px;" width="20" height="19" viewBox="0 0 20 19"><path d="M6 15 L3.5 9 A5 5 0 0 1 12 5 L15 8.5" fill="none" stroke="#dcdcdc" stroke-width="2.6"/><path d="M4.5 15.8 L8 14.3 M13 9.8 L16 7.5" stroke="#2b2b2b" stroke-width="1"/></svg>
<div style="left:1327.5px;top:560.5px;width:1px;height:17px;background:#1d1d1d;"></div>
<svg style="left:1329px;top:564.5px;" width="8" height="9" viewBox="0 0 8 9"><path d="M1.5 1 L6.5 4.5 L1.5 8 Z" fill="none" stroke="#8a8a8a" stroke-width="1"/></svg>
<div style="left:1342px;top:559.5px;width:32px;height:19px;background:#2b2b2b;border-radius:4px;border:1px solid #1d1d1d;box-sizing:border-box;border-top-color:#5a5a5a;"></div>
<div style="left:1343px;top:560.5px;width:19px;height:17px;background:#3b3b3b;border-radius:3px 0 0 3px;"></div>
<svg style="left:1342px;top:559.5px;" width="20" height="19" viewBox="0 0 20 19"><path d="M7 3 V16 M13 3 V16 M3 7 H17 M3 12.5 H17" stroke="#dcdcdc" stroke-width="1.2" fill="none"/></svg>
<div style="left:1362.5px;top:560.5px;width:1px;height:17px;background:#1d1d1d;"></div>
<svg style="left:1364px;top:564.5px;" width="8" height="9" viewBox="0 0 8 9"><path d="M1.5 1 L6.5 4.5 L1.5 8 Z" fill="none" stroke="#8a8a8a" stroke-width="1"/></svg>
<div style="left:1377px;top:559.5px;width:20px;height:19px;background:#2b2b2b;border-radius:4px;border:1px solid #1d1d1d;box-sizing:border-box;border-top-color:#5a5a5a;"></div>
<svg style="left:1377px;top:559.5px;" width="20" height="19" viewBox="0 0 20 19"><rect x="3" y="4" width="5" height="4.5" fill="#35c96b"/><rect x="9.5" y="4" width="8" height="4.5" fill="none" stroke="#35c96b" stroke-width="1.4"/><rect x="3" y="10.5" width="14.5" height="5" fill="#35c96b"/></svg>
<div style="left:1400px;top:559.5px;width:20px;height:19px;background:#2b2b2b;border-radius:4px;border:1px solid #1d1d1d;box-sizing:border-box;border-top-color:#5a5a5a;"></div>
<svg style="left:1400px;top:559.5px;" width="20" height="19" viewBox="0 0 20 19"><path d="M3 4.5 L7 9.5 L3 14.5 M7.5 4.5 L11.5 9.5 L7.5 14.5 M12 4.5 L16 9.5 L12 14.5" fill="none" stroke="#dcdcdc" stroke-width="1.6"/></svg>
<div style="left:1423px;top:559.5px;width:32px;height:19px;background:#2b2b2b;border-radius:4px;border:1px solid #1d1d1d;box-sizing:border-box;border-top-color:#5a5a5a;"></div>
<div style="left:1424px;top:560.5px;width:19px;height:17px;background:#3b3b3b;border-radius:3px 0 0 3px;"></div>
<svg style="left:1423px;top:559.5px;" width="20" height="19" viewBox="0 0 20 19"><rect x="3.6" y="4.1" width="12.8" height="9" fill="none" stroke="#dcdcdc" stroke-width="1.2"/><rect x="3" y="13.5" width="14" height="2" fill="#dcdcdc"/></svg>
<div style="left:1443.5px;top:560.5px;width:1px;height:17px;background:#1d1d1d;"></div>
<svg style="left:1445px;top:564.5px;" width="8" height="9" viewBox="0 0 8 9"><path d="M1.5 1 L6.5 4.5 L1.5 8 Z" fill="none" stroke="#8a8a8a" stroke-width="1"/></svg>
<div style="left:1458px;top:559.5px;width:32px;height:19px;background:#2b2b2b;border-radius:4px;border:1px solid #1d1d1d;box-sizing:border-box;border-top-color:#5a5a5a;"></div>
<div style="left:1459px;top:560.5px;width:19px;height:17px;background:#3b3b3b;border-radius:3px 0 0 3px;"></div>
<svg style="left:1458px;top:559.5px;" width="20" height="19" viewBox="0 0 20 19"><rect x="3.5" y="3.5" width="9" height="6" fill="none" stroke="#dcdcdc" stroke-width="1"/><path d="M6 12 H15 V6.5 M9 14.5 H17.5 V9" fill="none" stroke="#aaa" stroke-width="1"/></svg>
<div style="left:1478.5px;top:560.5px;width:1px;height:17px;background:#1d1d1d;"></div>
<svg style="left:1480px;top:564.5px;" width="8" height="9" viewBox="0 0 8 9"><path d="M1.5 1 L6.5 4.5 L1.5 8 Z" fill="none" stroke="#8a8a8a" stroke-width="1"/></svg>
<div style="left:1493px;top:559.5px;width:32px;height:19px;background:#2b2b2b;border-radius:4px;border:1px solid #1d1d1d;box-sizing:border-box;border-top-color:#5a5a5a;"></div>
<div style="left:1494px;top:560.5px;width:19px;height:17px;background:#3b3b3b;border-radius:3px 0 0 3px;"></div>
<svg style="left:1493px;top:559.5px;" width="20" height="19" viewBox="0 0 20 19"><rect x="3" y="3" width="9" height="9" fill="#dcdcdc"/><rect x="8" y="8" width="8.5" height="8.5" fill="#3b3b3b" stroke="#dcdcdc" stroke-width="1.2"/></svg>
<div style="left:1513.5px;top:560.5px;width:1px;height:17px;background:#1d1d1d;"></div>
<svg style="left:1515px;top:564.5px;" width="8" height="9" viewBox="0 0 8 9"><path d="M1.5 1 L6.5 4.5 L1.5 8 Z" fill="none" stroke="#8a8a8a" stroke-width="1"/></svg>
<div style="left:1528px;top:559.5px;width:32px;height:19px;background:#2b2b2b;border-radius:4px;border:1px solid #1d1d1d;box-sizing:border-box;border-top-color:#5a5a5a;"></div>
<svg style="left:1528px;top:559.5px;" width="20" height="19" viewBox="0 0 20 19"><rect x="4" y="3.5" width="3" height="3" fill="#35c96b"/><rect x="4" y="9.5" width="3" height="3" fill="#35c96b"/><rect x="7" y="6.5" width="3" height="3" fill="#35c96b"/><rect x="7" y="12.5" width="3" height="3" fill="#35c96b"/><rect x="10" y="3.5" width="3" height="3" fill="#35c96b"/><rect x="10" y="9.5" width="3" height="3" fill="#35c96b"/><rect x="13" y="6.5" width="3" height="3" fill="#35c96b"/><rect x="13" y="12.5" width="3" height="3" fill="#35c96b"/></svg>
<div style="left:1548.5px;top:560.5px;width:1px;height:17px;background:#1d1d1d;"></div>
<svg style="left:1550px;top:564.5px;" width="8" height="9" viewBox="0 0 8 9"><path d="M1.5 1 L6.5 4.5 L1.5 8 Z" fill="none" stroke="#8a8a8a" stroke-width="1"/></svg>
<div style="left:1563px;top:559.5px;width:20px;height:19px;background:#2b2b2b;border-radius:4px;border:1px solid #1d1d1d;box-sizing:border-box;border-top-color:#5a5a5a;"></div>
<svg style="left:1563px;top:559.5px;" width="20" height="19" viewBox="0 0 20 19"><rect x="8.6" y="2" width="2.8" height="4" rx="0.6" fill="#dcdcdc" transform="rotate(0 10 9.5)"/><rect x="8.6" y="2" width="2.8" height="4" rx="0.6" fill="#dcdcdc" transform="rotate(45 10 9.5)"/><rect x="8.6" y="2" width="2.8" height="4" rx="0.6" fill="#dcdcdc" transform="rotate(90 10 9.5)"/><rect x="8.6" y="2" width="2.8" height="4" rx="0.6" fill="#dcdcdc" transform="rotate(135 10 9.5)"/><rect x="8.6" y="2" width="2.8" height="4" rx="0.6" fill="#dcdcdc" transform="rotate(180 10 9.5)"/><rect x="8.6" y="2" width="2.8" height="4" rx="0.6" fill="#dcdcdc" transform="rotate(225 10 9.5)"/><rect x="8.6" y="2" width="2.8" height="4" rx="0.6" fill="#dcdcdc" transform="rotate(270 10 9.5)"/><rect x="8.6" y="2" width="2.8" height="4" rx="0.6" fill="#dcdcdc" transform="rotate(315 10 9.5)"/><circle cx="10" cy="9.5" r="5" fill="#dcdcdc"/><circle cx="10" cy="9.5" r="2.2" fill="#2b2b2b"/></svg>
<div style="left:1593px;top:85px;width:40px;height:22px;background:#464646;border-radius:4px 4px 0 0;"></div>
<div style="left:1598px;top:89px;height:16px;line-height:16px;font-size:12px;color:#dcdcdc;white-space:nowrap;letter-spacing:0.165px;">Color</div>
<div style="left:1634px;top:85px;width:69px;height:22px;background:#222;border-radius:4px 4px 0 0;"></div>
<div style="left:1639.5px;top:89px;height:16px;line-height:16px;font-size:12px;color:#dcdcdc;white-space:nowrap;letter-spacing:-0.270px;">Add Layers</div>
<div style="left:1593px;top:107px;width:307.5px;height:376.5px;background:#464646;"></div>
<div style="left:1900.5px;top:107px;width:13.5px;height:376.5px;background:#2e2e2e;"></div>
<div style="left:1902px;top:153px;width:10px;height:303px;background:#555;border-radius:5px;"></div>
<div style="left:1593px;top:107px;width:307px;height:170px;overflow:hidden">
<div style="left:53px;top:-47px;width:200px;height:200px;border-radius:50%;background:conic-gradient(from 90deg,#ff0000,#ff00ff,#0000ff,#00ffff,#00ff00,#ffff00,#ff0000);-webkit-mask:radial-gradient(circle closest-side,transparent 74.5%,#000 75.5%,#000 99.2%,transparent 100%);mask:radial-gradient(circle closest-side,transparent 74.5%,#000 75.5%,#000 99.2%,transparent 100%);"></div>
<div style="left:109px;top:9px;width:90px;height:90px;background:linear-gradient(to right,#000,rgba(0,0,0,0)),linear-gradient(to bottom,#fff,#1b00ff);"></div>
<svg style="left:192px;top:62px;" width="14" height="14" viewBox="0 0 14 14"><circle cx="7" cy="7" r="6" fill="none" stroke="#f0f0f0" stroke-width="1.1"/></svg>
<svg style="left:111px;top:126px;" width="14" height="14" viewBox="0 0 14 14"><circle cx="7" cy="7" r="6" fill="none" stroke="#f0f0f0" stroke-width="1.1"/></svg>
</div>
<div style="left:1600px;top:273px;width:22px;height:22px;background:#6755ff;border-radius:3px;"></div>
<div style="left:1625px;top:277px;height:16px;line-height:16px;font-size:12px;color:#dcdcdc;white-space:nowrap;letter-spacing:-0.065px;">Medium Slateblue</div>
<div style="left:1871px;top:273px;width:22px;height:22px;background:#2a2a2a;border-radius:4px;border:1px solid #1d1d1d;box-sizing:border-box;border-top-color:#5e5e5e;"></div>
<svg style="left:1871px;top:273px;" width="22" height="22" viewBox="0 0 22 22"><path d="M5 17.5 L5.8 14.8 L11.5 9 L13.4 10.9 L7.6 16.7 Z" fill="none" stroke="#b8b8b8" stroke-width="1"/><path d="M11 7.5 L14.8 11.3 L15.8 10.3 L17.6 8.5 A2.2 2.2 0 0 0 14 5 L12.2 6.8 Z" fill="#d8d8d8"/></svg>
<div style="left:1600px;top:300.5px;width:49.5px;height:17.5px;background:#4a4a4a;border-radius:3px;border:1px solid #5c5c5c;box-sizing:border-box;"></div>
<div style="left:1603px;top:301.5px;height:16px;line-height:16px;font-size:12px;color:#dcdcdc;white-space:nowrap;letter-spacing:-0.113px;">Hex</div>
<svg style="left:1636px;top:307px;" width="9" height="5" viewBox="0 0 9 5"><path d="M0.5 0.5 L4.5 4.5 L8.5 0.5" fill="none" stroke="#c8c8c8" stroke-width="1.2"/></svg>
<div style="left:1653px;top:298px;width:240px;height:21.5px;background:#262626;border-radius:3px;"></div>
<div style="left:1657.5px;top:302.5px;height:14px;line-height:14px;font-size:11px;color:#5a5a5a;white-space:nowrap;">#</div>
<div style="left:1670.5px;top:301.5px;height:16px;line-height:16px;font-size:12px;color:#dcdcdc;white-space:nowrap;letter-spacing:0.476px;">6755ff</div>
<div style="left:1600px;top:330px;width:230px;height:3.5px;background:#e4e4e4;border-radius:2px;"></div>
<div style="left:1829px;top:327px;width:10px;height:10px;background:#6fc9aa;border-radius:5px;"></div>
<div style="left:1832px;top:330px;width:4px;height:4px;background:#4d9c80;border-radius:2px;"></div>
<div style="left:1849px;top:324px;width:44px;height:16px;background:#2a2a2a;border-radius:3px;"></div>
<div style="left:1853px;top:324.5px;height:16px;line-height:16px;font-size:12px;color:#5a5a5a;white-space:nowrap;">A</div>
<div style="left:1866px;top:324.5px;height:16px;line-height:16px;font-size:12px;color:#dcdcdc;white-space:nowrap;letter-spacing:0.327px;">255</div>
<div style="left:1597px;top:346px;width:299px;height:22px;background:#262626;"></div>
<div style="left:1598.5px;top:348px;width:148.5px;height:20px;background:#464646;border-radius:4px 4px 0 0;"></div>
<div style="left:1648px;top:350px;height:16px;line-height:16px;font-size:12px;color:#dcdcdc;white-space:nowrap;letter-spacing:-0.253px;">Swatches</div>
<div style="left:1793.3px;top:350px;height:16px;line-height:16px;font-size:12px;color:#b4b4b4;white-space:nowrap;letter-spacing:0.053px;">Generator</div>
<div style="left:1598px;top:371px;width:257px;height:17.5px;background:#5a5a5a;border-radius:4px;"></div>
<div style="left:1598.5px;top:371.5px;width:62.5px;height:16.5px;background:#262626;border-radius:3px;"></div>
<svg style="left:1605.5px;top:375px;overflow:hidden;" width="11" height="10" viewBox="0 0 11 10"><path d="M1 0 V10 M4 0 V10 M7 0 V10" stroke="#35c96b" stroke-width="1.6"/><path d="M8.5 0.5 L10.5 10" stroke="#35c96b" stroke-width="1.3"/></svg>
<div style="left:1621.5px;top:372px;height:16px;line-height:16px;font-size:12px;color:#dcdcdc;white-space:nowrap;letter-spacing:0.046px;">Library</div>
<svg style="left:1671px;top:374.5px;" width="11" height="11" viewBox="0 0 11 11"><path d="M0.5 2.5 H4.5 L5.5 3.5 H10.5 V10.5 H0.5 Z M0.5 1 H4" fill="none" stroke="#d0d0d0" stroke-width="1"/><path d="M2.5 5.5 H8.5 M2.5 8 H8.5" stroke="#d0d0d0" stroke-width="1"/></svg>
<div style="left:1686.5px;top:372px;height:16px;line-height:16px;font-size:12px;color:#dcdcdc;white-space:nowrap;letter-spacing:0.022px;">Project</div>
<svg style="left:1738px;top:374.5px;" width="9" height="11" viewBox="0 0 9 11"><path d="M0.5 0.5 H5.5 L8.5 3.5 V10.5 H0.5 Z M5.5 0.5 V3.5 H8.5" fill="none" stroke="#d0d0d0" stroke-width="1"/></svg>
<div style="left:1752px;top:372px;height:16px;line-height:16px;font-size:12px;color:#dcdcdc;white-space:nowrap;letter-spacing:-0.605px;">Scene</div>
<svg style="left:1800.5px;top:374.5px;" width="11" height="11" viewBox="0 0 11 11"><path d="M3.5 0.8 H8 A2.5 2.5 0 0 1 10.5 3.3 V6.5 L6.5 10.2 H3.5 A2.7 2.7 0 0 1 0.8 7.5 V3.5 A2.7 2.7 0 0 1 3.5 0.8 Z" fill="none" stroke="#d0d0d0" stroke-width="1"/><path d="M6.5 10 V7.5 A1 1 0 0 1 7.5 6.5 H10.3" fill="none" stroke="#d0d0d0" stroke-width="1"/></svg>
<div style="left:1816px;top:372px;height:16px;line-height:16px;font-size:12px;color:#dcdcdc;white-space:nowrap;letter-spacing:-0.393px;">Labels</div>
<div style="left:1858.5px;top:371px;width:37px;height:17.5px;background:#5a5a5a;border-radius:4px;"></div>
<div style="left:1859px;top:371.5px;width:16.5px;height:16.5px;background:#262626;border-radius:3px;"></div>
<svg style="left:1862.5px;top:375px;" width="10" height="10" viewBox="0 0 10 10"><g fill="#35c96b"><rect x="0" y="0" width="4" height="4" rx="0.8"/><rect x="5.5" y="0" width="4" height="4" rx="0.8"/><rect x="0" y="5.5" width="4" height="4" rx="0.8"/><rect x="5.5" y="5.5" width="4" height="4" rx="0.8"/></g></svg>
<svg style="left:1880.5px;top:375.5px;" width="11" height="9" viewBox="0 0 11 9"><path d="M0 1 H11 M0 4.5 H11 M0 8 H11" stroke="#e0e0e0" stroke-width="1.1"/></svg>
<div style="left:1598.5px;top:393px;width:275px;height:16px;background:#505050;border-radius:3px;border:1px solid #5a5a5a;box-sizing:border-box;"></div>
<div style="left:1601.5px;top:393.5px;height:16px;line-height:16px;font-size:12px;color:#dcdcdc;white-space:nowrap;letter-spacing:-0.171px;">new</div>
<svg style="left:1860.5px;top:399px;" width="9" height="5" viewBox="0 0 9 5"><path d="M0.5 0.5 L4.5 4.5 L8.5 0.5" fill="none" stroke="#c8c8c8" stroke-width="1.2"/></svg>
<div style="left:1880px;top:400.5px;width:2px;height:1.6px;background:#d0d0d0;"></div>
<div style="left:1884.5px;top:400.5px;width:2px;height:1.6px;background:#d0d0d0;"></div>
<div style="left:1889px;top:400.5px;width:2px;height:1.6px;background:#d0d0d0;"></div>
<div style="left:1598px;top:410px;width:297.5px;height:73.5px;background:#262626;"></div>
<div style="left:1600px;top:412px;width:18px;height:18px;background:#8c52ff;border-radius:3px;"></div>
<div style="left:1622px;top:412px;width:18px;height:18px;background:#4a9cf5;border-radius:3px;"></div>
<div style="left:1644px;top:412px;width:18px;height:18px;background:#ff7550;border-radius:3px;"></div>
<div style="left:1666px;top:412px;width:18px;height:18px;background:#4dffb0;border-radius:3px;"></div>
<div style="left:1688px;top:412px;width:18px;height:18px;background:#f5475a;border-radius:3px;"></div>
<div style="left:1710px;top:412px;width:18px;height:18px;background:#ff4dc0;border-radius:3px;"></div>
<div style="left:1732px;top:412px;width:18px;height:18px;background:#ffd04d;border-radius:3px;"></div>
<div style="left:1754px;top:412px;width:18px;height:18px;background:#4169d8;border-radius:3px;"></div>
<div style="left:1776px;top:412px;width:18px;height:18px;background:#52e0d0;border-radius:3px;"></div>
<div style="left:1798px;top:412px;width:18px;height:18px;background:#d878d0;border-radius:3px;"></div>
<div style="left:1820px;top:412px;width:18px;height:18px;background:#b0ec8c;border-radius:3px;"></div>
<div style="left:1842px;top:412px;width:18px;height:18px;background:#6755ff;border-radius:3px;"></div>
<div style="left:1593px;top:490.5px;width:38px;height:21.5px;background:#464646;border-radius:4px 4px 0 0;"></div>
<div style="left:1598.5px;top:494px;height:16px;line-height:16px;font-size:12px;color:#dcdcdc;white-space:nowrap;letter-spacing:0.063px;">Align</div>
<div style="left:1593px;top:512px;width:321px;height:68px;background:#464646;"></div>
<div style="left:1601px;top:524px;height:16px;line-height:16px;font-size:12px;color:#dcdcdc;white-space:nowrap;letter-spacing:0.071px;">Alignment</div>
<div style="left:1601px;top:552px;height:16px;line-height:16px;font-size:12px;color:#dcdcdc;white-space:nowrap;letter-spacing:0.332px;">Distribution</div>
<div style="left:1790.5px;top:522.5px;width:53.5px;height:17.5px;background:#2b2b2b;border-radius:4px;border:1px solid #1d1d1d;box-sizing:border-box;"></div>
<svg style="left:1790.5px;top:522.5px;" width="17.5" height="17.5" viewBox="0 0 17.5 17.5"><path d="M4 3 V15" stroke="#e4e4e4" stroke-width="1.2"/><path d="M6.5 7 H12 M6.5 11.5 H15" stroke="#e4e4e4" stroke-width="2"/></svg>
<svg style="left:1808.5px;top:522.5px;" width="17.5" height="17.5" viewBox="0 0 17.5 17.5"><path d="M9 3 V15" stroke="#e4e4e4" stroke-width="1.2"/><path d="M5.5 7 H12.5 M4 11.5 H14" stroke="#e4e4e4" stroke-width="2"/></svg>
<div style="left:1807.9px;top:523.5px;width:1px;height:15.5px;background:#1d1d1d;"></div>
<svg style="left:1826.5px;top:522.5px;" width="17.5" height="17.5" viewBox="0 0 17.5 17.5"><path d="M14 3 V15" stroke="#e4e4e4" stroke-width="1.2"/><path d="M6 7 H11.5 M3 11.5 H11.5" stroke="#e4e4e4" stroke-width="2"/></svg>
<div style="left:1825.9px;top:523.5px;width:1px;height:15.5px;background:#1d1d1d;"></div>
<div style="left:1852.5px;top:522.5px;width:53.5px;height:17.5px;background:#2b2b2b;border-radius:4px;border:1px solid #1d1d1d;box-sizing:border-box;"></div>
<svg style="left:1852.5px;top:522.5px;" width="17.5" height="17.5" viewBox="0 0 17.5 17.5"><path d="M3 4 H15" stroke="#e4e4e4" stroke-width="1.2"/><path d="M7 6.5 V15 M11.5 6.5 V11" stroke="#e4e4e4" stroke-width="2"/></svg>
<svg style="left:1870.5px;top:522.5px;" width="17.5" height="17.5" viewBox="0 0 17.5 17.5"><path d="M3 9 H15" stroke="#e4e4e4" stroke-width="1.2"/><path d="M7 4 V14 M11.5 5.5 V12.5" stroke="#e4e4e4" stroke-width="2"/></svg>
<div style="left:1869.9px;top:523.5px;width:1px;height:15.5px;background:#1d1d1d;"></div>
<svg style="left:1888.5px;top:522.5px;" width="17.5" height="17.5" viewBox="0 0 17.5 17.5"><path d="M3 14.5 H15" stroke="#e4e4e4" stroke-width="1.2"/><path d="M7 9 V12.5 M11.5 4 V12.5" stroke="#e4e4e4" stroke-width="2"/></svg>
<div style="left:1887.9px;top:523.5px;width:1px;height:15.5px;background:#1d1d1d;"></div>
<div style="left:1790.5px;top:550.5px;width:53.5px;height:17.5px;background:#2b2b2b;border-radius:4px;border:1px solid #1d1d1d;box-sizing:border-box;"></div>
<svg style="left:1790.5px;top:550.5px;" width="17.5" height="17.5" viewBox="0 0 17.5 17.5"><path d="M3.5 3 V15 M14 3 V15" stroke="#e4e4e4" stroke-width="1.1"/><path d="M8.7 5 V13" stroke="#e4e4e4" stroke-width="2.2"/></svg>
<svg style="left:1808.5px;top:550.5px;" width="17.5" height="17.5" viewBox="0 0 17.5 17.5"><path d="M3 3.5 H15 M3 14.5 H15" stroke="#e4e4e4" stroke-width="1.1"/><path d="M5 9 H13" stroke="#e4e4e4" stroke-width="2.2"/></svg>
<div style="left:1807.9px;top:551.5px;width:1px;height:15.5px;background:#1d1d1d;"></div>
<svg style="left:1826.5px;top:550.5px;" width="17.5" height="17.5" viewBox="0 0 17.5 17.5"><path d="M4.5 14 V10.5 M8.7 11.5 V8 M13 8.5 V5" stroke="#e4e4e4" stroke-width="2"/><path d="M2.5 5.5 V2.5 H5.5 M12 2.5 H15 V5.5 M15 12 V15 H12 M5.5 15 H2.5 V12" fill="none" stroke="#e4e4e4" stroke-width="1"/></svg>
<div style="left:1825.9px;top:551.5px;width:1px;height:15.5px;background:#1d1d1d;"></div>
<div style="left:494px;top:586.5px;width:89px;height:21.5px;background:#464646;border-radius:4px 4px 0 0;"></div>
<div style="left:499.7px;top:590px;height:16px;line-height:16px;font-size:12px;color:#dcdcdc;white-space:nowrap;letter-spacing:-0.170px;">Scene Window</div>
<div style="left:584.5px;top:586.5px;width:99px;height:21.5px;background:#222;border-radius:4px 4px 0 0;"></div>
<div style="left:589.5px;top:590px;height:16px;line-height:16px;font-size:12px;color:#dcdcdc;white-space:nowrap;letter-spacing:-0.100px;">JavaScript Editor</div>
<div style="left:685px;top:586.5px;width:112px;height:21.5px;background:#222;border-radius:4px 4px 0 0;"></div>
<div style="left:690.5px;top:590px;height:16px;line-height:16px;font-size:12px;color:#dcdcdc;white-space:nowrap;letter-spacing:-0.191px;">Dependency Graph</div>
<div style="left:494px;top:608px;width:1420px;height:22px;background:#2a2a2a;"></div>
<div style="left:626.7px;top:612px;height:16px;line-height:16px;font-size:12px;color:#a8a8a8;white-space:nowrap;letter-spacing:-0.031px;">Composition 1</div>
<div style="left:979.3px;top:612px;height:16px;line-height:16px;font-size:12px;color:#a8a8a8;white-space:nowrap;letter-spacing:-0.031px;">Composition 2</div>
<div style="left:1331.7px;top:612px;height:16px;line-height:16px;font-size:12px;color:#a8a8a8;white-space:nowrap;letter-spacing:-0.031px;">Composition 3</div>
<div style="left:1557px;top:610px;width:352px;height:20px;background:#464646;border-radius:4px 4px 0 0;"></div>
<div style="left:1684.3px;top:612px;height:16px;line-height:16px;font-size:12px;color:#dcdcdc;white-space:nowrap;letter-spacing:-0.031px;">Composition 4</div>
<svg style="left:835px;top:616px;" width="8" height="8" viewBox="0 0 8 8"><path d="M0.5 0.5 L7.5 7.5 M7.5 0.5 L0.5 7.5" stroke="#a0a0a0" stroke-width="1" fill="none"/></svg>
<svg style="left:1186.7px;top:616px;" width="8" height="8" viewBox="0 0 8 8"><path d="M0.5 0.5 L7.5 7.5 M7.5 0.5 L0.5 7.5" stroke="#a0a0a0" stroke-width="1" fill="none"/></svg>
<svg style="left:1540px;top:616px;" width="8" height="8" viewBox="0 0 8 8"><path d="M0.5 0.5 L7.5 7.5 M7.5 0.5 L0.5 7.5" stroke="#a0a0a0" stroke-width="1" fill="none"/></svg>
<svg style="left:1892px;top:616px;" width="8" height="8" viewBox="0 0 8 8"><path d="M0.5 0.5 L7.5 7.5 M7.5 0.5 L0.5 7.5" stroke="#c8c8c8" stroke-width="1" fill="none"/></svg>
<div style="left:852.3px;top:615.5px;width:1px;height:10px;background:#a0a0a0;"></div>
<div style="left:1204.7px;top:615.5px;width:1px;height:10px;background:#a0a0a0;"></div>
<div style="left:494px;top:630px;width:465px;height:347px;background:#464646;"></div>
<div style="left:496.5px;top:632px;width:254.5px;height:20px;background:#262626;border-radius:10px;"></div>
<svg style="left:500px;top:635.5px;" width="14" height="14" viewBox="0 0 14 14"><circle cx="5.5" cy="5.5" r="4.6" fill="none" stroke="#d8d8d8" stroke-width="1.2"/><path d="M9.6 9.6 L11.4 11.4" stroke="#d8d8d8" stroke-width="2.2" stroke-linecap="round"/></svg>
<div style="left:520.5px;top:634.5px;height:16px;line-height:16px;font-size:12px;color:#888;white-space:nowrap;letter-spacing:-0.243px;">Enter a layer name</div>
<div style="left:753.5px;top:632.5px;width:19.5px;height:19.5px;background:#2b2b2b;border-radius:4px;border:1px solid #1d1d1d;box-sizing:border-box;border-top-color:#5e5e5e;"></div>
<svg style="left:753.5px;top:632.5px;" width="19.5" height="19.5" viewBox="0 0 19.5 19.5"><path d="M9.75 5 V14.5 M5 9.75 H14.5" stroke="#f0f0f0" stroke-width="1.7"/><path d="M16.9 13.9 V16.9 H13.9 Z" fill="#62d3a4"/></svg>
<div style="left:797.5px;top:632.5px;width:19.5px;height:19.5px;background:#2b2b2b;border-radius:4px;border:1px solid #1d1d1d;box-sizing:border-box;border-top-color:#5e5e5e;"></div>
<svg style="left:797.5px;top:632.5px;" width="19.5" height="19.5" viewBox="0 0 19.5 19.5"><circle cx="7.5" cy="12" r="4" fill="#6a6a6a"/><circle cx="9.5" cy="10" r="4.3" fill="#9a9a9a"/><circle cx="12" cy="7.8" r="4.5" fill="#e0e0e0"/></svg>
<div style="left:819.5px;top:632.5px;width:19.5px;height:19.5px;background:#2b2b2b;border-radius:4px;border:1px solid #1d1d1d;box-sizing:border-box;border-top-color:#5e5e5e;"></div>
<svg style="left:819.5px;top:632.5px;" width="19.5" height="19.5" viewBox="0 0 19.5 19.5"><path d="M11 8 L12 11 L15 12 L12 13 L11 16 L10 13 L7 12 L10 11 Z" fill="#e0e0e0"/><g fill="#c8c8c8"><rect x="4" y="4" width="1.8" height="1.8"/><rect x="8.5" y="3" width="1.8" height="1.8"/><rect x="13" y="5" width="1.8" height="1.8"/><rect x="4.5" y="9.5" width="1.8" height="1.8"/></g><path d="M16.9 13.9 V16.9 H13.9 Z" fill="#62d3a4"/></svg>
<div style="left:841.5px;top:632.5px;width:19.5px;height:19.5px;background:#2b2b2b;border-radius:4px;border:1px solid #1d1d1d;box-sizing:border-box;border-top-color:#5e5e5e;"></div>
<svg style="left:841.5px;top:632.5px;" width="19.5" height="19.5" viewBox="0 0 19.5 19.5"><path d="M3.5 5 H16 M3.5 9.75 H16 M3.5 14.5 H16" stroke="#d0d0d0" stroke-width="1" stroke-dasharray="3 2.5 7 0"/><circle cx="8" cy="5" r="1.6" fill="#2b2b2b" stroke="#e0e0e0"/><circle cx="12" cy="9.75" r="1.6" fill="#2b2b2b" stroke="#e0e0e0"/><circle cx="8" cy="14.5" r="1.6" fill="#2b2b2b" stroke="#e0e0e0"/><path d="M16.9 13.9 V16.9 H13.9 Z" fill="#62d3a4"/></svg>
<div style="left:863.5px;top:633px;width:93.5px;height:18.5px;background:#2a2a2a;border-radius:3px;"></div>
<div style="left:868px;top:635px;height:15px;line-height:15px;font-size:11.5px;color:#555;white-space:nowrap;">F</div>
<div style="left:880px;top:634.5px;height:16px;line-height:16px;font-size:12px;color:#dcdcdc;white-space:nowrap;letter-spacing:0.077px;">87</div>
<div style="left:494px;top:653px;width:465px;height:19px;background:#464646;"></div>
<svg style="left:500px;top:657px;" width="10" height="12" viewBox="0 0 10 12"><rect x="1" y="5" width="8" height="6.5" rx="0.8" fill="#d0d0d0"/><path d="M2.8 5 V3.5 A2.2 2.2 0 0 1 7.2 3.5 V5" fill="none" stroke="#d0d0d0" stroke-width="1.2"/><rect x="4.3" y="7.3" width="1.4" height="2" fill="#464646"/></svg>
<svg style="left:516.8px;top:658.5px;" width="14" height="9" viewBox="0 0 14 9"><path d="M0.6 4.5 Q7 -2.5 13.4 4.5 Q7 11.5 0.6 4.5 Z" fill="none" stroke="#d0d0d0" stroke-width="1.1"/><circle cx="7" cy="4.5" r="2.2" fill="#d0d0d0"/></svg>
<svg style="left:536.5px;top:656.5px;" width="12" height="13" viewBox="0 0 12 13"><path d="M6 0.8 L11.2 3.6 V9.4 L6 12.2 L0.8 9.4 V3.6 Z M0.8 3.6 L6 6.4 L11.2 3.6 M6 6.4 V12.2" fill="none" stroke="#d0d0d0" stroke-width="1"/></svg>
<svg style="left:556px;top:657px;" width="13" height="12" viewBox="0 0 13 12"><path d="M0.5 4 H3 L6.5 1 V11 L3 8 H0.5 Z" fill="#d0d0d0"/><path d="M8.2 3.5 Q10 6 8.2 8.5 M10 1.5 Q13.2 6 10 10.5" fill="none" stroke="#d0d0d0" stroke-width="1.1"/></svg>
<svg style="left:575px;top:656.5px;" width="12" height="12" viewBox="0 0 12 12"><path d="M1 11 L1.6 9 L6.5 4.1 L7.9 5.5 L3 10.4 Z" fill="none" stroke="#a8a8a8" stroke-width="1"/><path d="M6.2 3 L9 5.8 L10 4.8 L11.4 3.4 A1.7 1.7 0 0 0 8.6 0.6 L7.2 2 Z" fill="#c8c8c8"/></svg>
<svg style="left:593px;top:658px;" width="15" height="10" viewBox="0 0 15 10"><path d="M0.5 5 L4 1 H13 A1.2 1.2 0 0 1 14.2 2.2 V7.8 A1.2 1.2 0 0 1 13 9 H4 Z" fill="#d8d8d8"/><circle cx="4.5" cy="5" r="1.3" fill="#464646"/></svg>
<div style="left:649px;top:656px;height:16px;line-height:16px;font-size:12px;color:#dcdcdc;white-space:nowrap;letter-spacing:-0.252px;">Name</div>
<div style="left:494px;top:672px;width:453px;height:305px;background:#2d2d2d;"></div>
<div style="left:494px;top:672px;width:453px;height:221px;background:#333;"></div>
<div style="left:947px;top:672.5px;width:12px;height:304.5px;background:#333;"></div>
<div style="left:948px;top:673.5px;width:9.5px;height:287px;background:#484848;border-radius:5px;"></div>
<div style="left:496px;top:674px;width:17.5px;height:17.5px;background:#282828;border-radius:3px;"></div>
<div style="left:515px;top:674px;width:18px;height:17.5px;background:#282828;border-radius:3px;"></div>
<svg style="left:517px;top:676px;" width="14" height="14" viewBox="0 0 14 14"><path d="M12 7 A5 5 0 1 1 9.5 2.7" fill="none" stroke="#d0d0d0" stroke-width="1.3"/><path d="M4.6 6.6 L6.8 9 L12 3.2" fill="none" stroke="#d0d0d0" stroke-width="1.4"/></svg>
<div style="left:573px;top:675px;width:16px;height:16px;background:#6fdf9f;border-radius:2.5px;"></div>
<svg style="left:593px;top:678px;" width="15" height="10" viewBox="0 0 15 10"><path d="M0.5 5 L4 1 H13 A1.2 1.2 0 0 1 14.2 2.2 V7.8 A1.2 1.2 0 0 1 13 9 H4 Z" fill="#d8d8d8"/><circle cx="4.5" cy="5" r="1.3" fill="#333"/></svg>
<div style="left:610.5px;top:674.5px;width:31px;height:17px;background:#303030;border-radius:3px;"></div>
<svg style="left:613.5px;top:681.05px;" width="8" height="4.5" viewBox="0 0 8 4.5"><path d="M0.5 0.5 L4 4 L7.5 0.5" fill="none" stroke="#7a7a7a" stroke-width="1.2"/></svg>
<svg style="left:648.7px;top:675px;" width="15" height="16" viewBox="0 0 15 16"><path d="M0.3 7 H5.5 V10.5 H9 V15.3 H0.3 Z" fill="#a6d2fb"/><path d="M6.3 1.5 H14.5 M6.3 4.5 H14.5 M6.3 7.6 H14.5" stroke="#f0f0f0" stroke-width="1"/></svg>
<div style="left:667.3px;top:675.8px;height:16px;line-height:16px;font-size:12px;color:#dcdcdc;white-space:nowrap;letter-spacing:0.090px;">Color Array</div>
<div style="left:904.5px;top:674.5px;width:21.5px;height:17px;background:#2f2f2f;border-radius:3px;"></div>
<div style="left:915px;top:674.5px;width:1px;height:17px;background:#333;"></div>
<svg style="left:906.5px;top:679.2px;" width="7" height="7" viewBox="0 0 7 7"><path d="M0.3 3.5 L3 0.5 H6.5 V6.5 H3 Z" fill="#8a7e4e"/></svg>
<svg style="left:918px;top:679.2px;" width="7" height="7" viewBox="0 0 7 7"><path d="M6.7 3.5 L4 0.5 H0.5 V6.5 H4 Z" fill="#9a4cb8"/></svg>
<svg style="left:930.5px;top:677.7px;" width="10" height="10" viewBox="0 0 10 10"><circle cx="5" cy="5" r="4" fill="none" stroke="#9a9a9a" stroke-width="1.1"/></svg>
<div style="left:496px;top:696px;width:17.5px;height:17.5px;background:#282828;border-radius:3px;"></div>
<div style="left:515px;top:696px;width:18px;height:17.5px;background:#282828;border-radius:3px;"></div>
<svg style="left:517px;top:698px;" width="14" height="14" viewBox="0 0 14 14"><path d="M12 7 A5 5 0 1 1 9.5 2.7" fill="none" stroke="#d0d0d0" stroke-width="1.3"/><path d="M4.6 6.6 L6.8 9 L12 3.2" fill="none" stroke="#d0d0d0" stroke-width="1.4"/></svg>
<div style="left:573px;top:697px;width:16px;height:16px;background:#c8f07c;border-radius:2.5px;"></div>
<svg style="left:593px;top:700px;" width="15" height="10" viewBox="0 0 15 10"><path d="M0.5 5 L4 1 H13 A1.2 1.2 0 0 1 14.2 2.2 V7.8 A1.2 1.2 0 0 1 13 9 H4 Z" fill="#d8d8d8"/><circle cx="4.5" cy="5" r="1.3" fill="#333"/></svg>
<svg style="left:667.5px;top:697.5px;" width="15" height="14" viewBox="0 0 15 14"><path d="M0.5 1.0 l3 3 m0 -3 l-3 3" stroke="#8fe08f" stroke-width="1" fill="none"/><path d="M10.0 0.5 l3 3 m0 -3 l-3 3" stroke="#8fe08f" stroke-width="1" fill="none"/><path d="M5.5 5.0 l3 3 m0 -3 l-3 3" stroke="#8fe08f" stroke-width="1" fill="none"/><path d="M1.0 10.0 l3 3 m0 -3 l-3 3" stroke="#8fe08f" stroke-width="1" fill="none"/><path d="M10.5 9.0 l3 3 m0 -3 l-3 3" stroke="#8fe08f" stroke-width="1" fill="none"/></svg>
<div style="left:686.7px;top:697.8px;height:16px;line-height:16px;font-size:12px;color:#dcdcdc;white-space:nowrap;letter-spacing:-0.222px;">Random [Index]</div>
<div style="left:904.5px;top:696.5px;width:21.5px;height:17px;background:#2f2f2f;border-radius:3px;"></div>
<div style="left:915px;top:696.5px;width:1px;height:17px;background:#333;"></div>
<svg style="left:906.5px;top:701.2px;" width="7" height="7" viewBox="0 0 7 7"><path d="M0.3 3.5 L3 0.5 H6.5 V6.5 H3 Z" fill="#5a5a5a"/></svg>
<svg style="left:918px;top:701.2px;" width="7" height="7" viewBox="0 0 7 7"><path d="M6.7 3.5 L4 0.5 H0.5 V6.5 H4 Z" fill="#9a4cb8"/></svg>
<svg style="left:930.5px;top:699.7px;" width="10" height="10" viewBox="0 0 10 10"><circle cx="5" cy="5" r="4" fill="none" stroke="#9a9a9a" stroke-width="1.1"/></svg>
<div style="left:496px;top:718px;width:17.5px;height:17.5px;background:#282828;border-radius:3px;"></div>
<div style="left:515px;top:718px;width:18px;height:17.5px;background:#282828;border-radius:3px;"></div>
<svg style="left:517px;top:720px;" width="14" height="14" viewBox="0 0 14 14"><path d="M12 7 A5 5 0 1 1 9.5 2.7" fill="none" stroke="#d0d0d0" stroke-width="1.3"/><path d="M4.6 6.6 L6.8 9 L12 3.2" fill="none" stroke="#d0d0d0" stroke-width="1.4"/></svg>
<div style="left:573px;top:719px;width:16px;height:16px;background:#c8f07c;border-radius:2.5px;"></div>
<svg style="left:593px;top:722px;" width="15" height="10" viewBox="0 0 15 10"><path d="M0.5 5 L4 1 H13 A1.2 1.2 0 0 1 14.2 2.2 V7.8 A1.2 1.2 0 0 1 13 9 H4 Z" fill="#d8d8d8"/><circle cx="4.5" cy="5" r="1.3" fill="#333"/></svg>
<svg style="left:646.7px;top:722px;" width="18" height="10" viewBox="0 0 18 10"><path d="M0.3 5.5 L2.2 1.6 Q3 0.2 3.8 1.6 L6.6 8.4 Q7.4 9.8 8.2 8.4 L10.6 1.6 Q11.4 0.2 12.2 1.6 L15 8.4 Q15.8 9.8 16.6 8.4 L17.7 6" fill="none" stroke="#86d98a" stroke-width="1.2"/></svg>
<div style="left:667.3px;top:719.8px;height:16px;line-height:16px;font-size:12px;color:#dcdcdc;white-space:nowrap;letter-spacing:-0.068px;">Oscillator [Position.Z] Cosine</div>
<div style="left:904.5px;top:718.5px;width:21.5px;height:17px;background:#2f2f2f;border-radius:3px;"></div>
<div style="left:915px;top:718.5px;width:1px;height:17px;background:#333;"></div>
<svg style="left:906.5px;top:723.2px;" width="7" height="7" viewBox="0 0 7 7"><path d="M0.3 3.5 L3 0.5 H6.5 V6.5 H3 Z" fill="#8a7e4e"/></svg>
<svg style="left:918px;top:723.2px;" width="7" height="7" viewBox="0 0 7 7"><path d="M6.7 3.5 L4 0.5 H0.5 V6.5 H4 Z" fill="#9a4cb8"/></svg>
<svg style="left:930.5px;top:721.7px;" width="10" height="10" viewBox="0 0 10 10"><circle cx="5" cy="5" r="4" fill="none" stroke="#9a9a9a" stroke-width="1.1"/></svg>
<div style="left:496px;top:740px;width:17.5px;height:17.5px;background:#282828;border-radius:3px;"></div>
<div style="left:515px;top:740px;width:18px;height:17.5px;background:#282828;border-radius:3px;"></div>
<svg style="left:517px;top:742px;" width="14" height="14" viewBox="0 0 14 14"><path d="M12 7 A5 5 0 1 1 9.5 2.7" fill="none" stroke="#d0d0d0" stroke-width="1.3"/><path d="M4.6 6.6 L6.8 9 L12 3.2" fill="none" stroke="#d0d0d0" stroke-width="1.4"/></svg>
<div style="left:573px;top:741px;width:16px;height:16px;background:#c8f07c;border-radius:2.5px;"></div>
<svg style="left:593px;top:744px;" width="15" height="10" viewBox="0 0 15 10"><path d="M0.5 5 L4 1 H13 A1.2 1.2 0 0 1 14.2 2.2 V7.8 A1.2 1.2 0 0 1 13 9 H4 Z" fill="#d8d8d8"/><circle cx="4.5" cy="5" r="1.3" fill="#333"/></svg>
<svg style="left:646.7px;top:744px;" width="18" height="10" viewBox="0 0 18 10"><path d="M0.3 5.5 L2.2 1.6 Q3 0.2 3.8 1.6 L6.6 8.4 Q7.4 9.8 8.2 8.4 L10.6 1.6 Q11.4 0.2 12.2 1.6 L15 8.4 Q15.8 9.8 16.6 8.4 L17.7 6" fill="none" stroke="#86d98a" stroke-width="1.2"/></svg>
<div style="left:667.3px;top:741.8px;height:16px;line-height:16px;font-size:12px;color:#dcdcdc;white-space:nowrap;letter-spacing:-0.085px;">Oscillator [Position.X] Sine</div>
<div style="left:904.5px;top:740.5px;width:21.5px;height:17px;background:#2f2f2f;border-radius:3px;"></div>
<div style="left:915px;top:740.5px;width:1px;height:17px;background:#333;"></div>
<svg style="left:906.5px;top:745.2px;" width="7" height="7" viewBox="0 0 7 7"><path d="M0.3 3.5 L3 0.5 H6.5 V6.5 H3 Z" fill="#8a7e4e"/></svg>
<svg style="left:918px;top:745.2px;" width="7" height="7" viewBox="0 0 7 7"><path d="M6.7 3.5 L4 0.5 H0.5 V6.5 H4 Z" fill="#9a4cb8"/></svg>
<svg style="left:930.5px;top:743.7px;" width="10" height="10" viewBox="0 0 10 10"><circle cx="5" cy="5" r="4" fill="none" stroke="#9a9a9a" stroke-width="1.1"/></svg>
<div style="left:496px;top:762px;width:17.5px;height:17.5px;background:#282828;border-radius:3px;"></div>
<div style="left:515px;top:762px;width:18px;height:17.5px;background:#282828;border-radius:3px;"></div>
<svg style="left:517px;top:764px;" width="14" height="14" viewBox="0 0 14 14"><path d="M12 7 A5 5 0 1 1 9.5 2.7" fill="none" stroke="#d0d0d0" stroke-width="1.3"/><path d="M4.6 6.6 L6.8 9 L12 3.2" fill="none" stroke="#d0d0d0" stroke-width="1.4"/></svg>
<div style="left:573px;top:763px;width:16px;height:16px;background:#c8f07c;border-radius:2.5px;"></div>
<svg style="left:593px;top:766px;" width="15" height="10" viewBox="0 0 15 10"><path d="M0.5 5 L4 1 H13 A1.2 1.2 0 0 1 14.2 2.2 V7.8 A1.2 1.2 0 0 1 13 9 H4 Z" fill="#d8d8d8"/><circle cx="4.5" cy="5" r="1.3" fill="#333"/></svg>
<svg style="left:647.7px;top:762.5px;" width="17" height="17" viewBox="0 0 17 17"><path d="M3.5 2 V14.5 H15.5 M3.5 14.5 L11 7" fill="none" stroke="#d0d0d0" stroke-width="1.1"/><path d="M1.5 4 L3.5 1.5 L5.5 4 M13.5 12.5 L16 14.5 L13.5 16.5 M8.5 6.5 H11.5 V9.5" fill="none" stroke="#8fe08f" stroke-width="1"/></svg>
<div style="left:667.3px;top:763.8px;height:16px;line-height:16px;font-size:12px;color:#dcdcdc;white-space:nowrap;letter-spacing:0.165px;">3D Matrix [Duplicator]</div>
<div style="left:904.5px;top:762.5px;width:21.5px;height:17px;background:#2f2f2f;border-radius:3px;"></div>
<div style="left:915px;top:762.5px;width:1px;height:17px;background:#333;"></div>
<div style="left:916px;top:762.5px;width:10.5px;height:17px;border-radius:2px;border:1px solid #7c3f96;box-sizing:border-box;"></div>
<svg style="left:906.5px;top:767.2px;" width="7" height="7" viewBox="0 0 7 7"><path d="M0.3 3.5 L3 0.5 H6.5 V6.5 H3 Z" fill="#8a7e4e"/></svg>
<svg style="left:918px;top:767.2px;" width="7" height="7" viewBox="0 0 7 7"><path d="M6.7 3.5 L4 0.5 H0.5 V6.5 H4 Z" fill="#9a4cb8"/></svg>
<svg style="left:930.5px;top:765.7px;" width="10" height="10" viewBox="0 0 10 10"><circle cx="5" cy="5" r="4" fill="none" stroke="#9a9a9a" stroke-width="1.1"/></svg>
<div style="left:496px;top:783px;width:447px;height:20px;background:#5a5540;border-radius:3px;"></div>
<div style="left:496px;top:784px;width:17.5px;height:17.5px;background:#282828;border-radius:3px;"></div>
<div style="left:515px;top:784px;width:18px;height:17.5px;background:#282828;border-radius:3px;"></div>
<svg style="left:517px;top:788.5px;" width="14" height="9" viewBox="0 0 14 9"><path d="M0.6 4.5 Q7 -2.5 13.4 4.5 Q7 11.5 0.6 4.5 Z" fill="none" stroke="#d8d8d8" stroke-width="1.1"/><circle cx="7" cy="4.5" r="2.2" fill="#d8d8d8"/></svg>
<div style="left:534.5px;top:784px;width:17.5px;height:17.5px;background:#282828;border-radius:3px;"></div>
<div style="left:573px;top:785px;width:16px;height:16px;background:#ffe57f;border-radius:2.5px;"></div>
<svg style="left:593px;top:788px;" width="15" height="10" viewBox="0 0 15 10"><path d="M0.5 5 L4 1 H13 A1.2 1.2 0 0 1 14.2 2.2 V7.8 A1.2 1.2 0 0 1 13 9 H4 Z" fill="#d8d8d8"/><circle cx="4.5" cy="5" r="1.3" fill="#5a5540"/></svg>
<svg style="left:648.7px;top:785.5px;" width="14" height="15" viewBox="0 0 14 15"><rect x="1" y="0.5" width="1.8" height="1.8" fill="#f0d860"/><rect x="1" y="4.8" width="1.8" height="1.8" fill="#f0d860"/><rect x="1" y="9.1" width="1.8" height="1.8" fill="#f0d860"/><rect x="1" y="13.399999999999999" width="1.8" height="1.8" fill="#f0d860"/><rect x="6" y="0.5" width="1.8" height="1.8" fill="#f0d860"/><rect x="6" y="4.8" width="1.8" height="1.8" fill="#f0d860"/><rect x="6" y="9.1" width="1.8" height="1.8" fill="#f0d860"/><rect x="6" y="13.399999999999999" width="1.8" height="1.8" fill="#f0d860"/><rect x="11" y="0.5" width="1.8" height="1.8" fill="#f0d860"/><rect x="11" y="4.8" width="1.8" height="1.8" fill="#f0d860"/><rect x="11" y="9.1" width="1.8" height="1.8" fill="#f0d860"/><rect x="11" y="13.399999999999999" width="1.8" height="1.8" fill="#f0d860"/></svg>
<div style="left:667.3px;top:785.8px;height:16px;line-height:16px;font-size:12px;color:#dcdcdc;white-space:nowrap;letter-spacing:0.148px;">Duplicator</div>
<div style="left:904.5px;top:784.5px;width:21.5px;height:17px;background:#262626;border-radius:3px;"></div>
<div style="left:915px;top:784.5px;width:1px;height:17px;background:#5a5540;"></div>
<svg style="left:906.5px;top:789.2px;" width="7" height="7" viewBox="0 0 7 7"><path d="M0.3 3.5 L3 0.5 H6.5 V6.5 H3 Z" fill="#d8b95a"/></svg>
<svg style="left:918px;top:789.2px;" width="7" height="7" viewBox="0 0 7 7"><path d="M6.7 3.5 L4 0.5 H0.5 V6.5 H4 Z" fill="#5a5a5a"/></svg>
<svg style="left:930.5px;top:787.7px;" width="10" height="10" viewBox="0 0 10 10"><circle cx="5" cy="5" r="4" fill="none" stroke="#6a6a6a" stroke-width="1.1"/></svg>
<div style="left:496px;top:806px;width:17.5px;height:17.5px;background:#282828;border-radius:3px;"></div>
<div style="left:515px;top:806px;width:18px;height:17.5px;background:#282828;border-radius:3px;"></div>
<div style="left:534.5px;top:806px;width:17.5px;height:17.5px;background:#282828;border-radius:3px;"></div>
<div style="left:573px;top:807px;width:16px;height:16px;background:#ffe57f;border-radius:2.5px;"></div>
<svg style="left:593px;top:810px;" width="15" height="10" viewBox="0 0 15 10"><path d="M0.5 5 L4 1 H13 A1.2 1.2 0 0 1 14.2 2.2 V7.8 A1.2 1.2 0 0 1 13 9 H4 Z" fill="#d8d8d8"/><circle cx="4.5" cy="5" r="1.3" fill="#333"/></svg>
<div style="left:610.5px;top:806.5px;width:31px;height:17px;background:#303030;border-radius:3px;"></div>
<svg style="left:613.5px;top:813.05px;" width="8" height="4.5" viewBox="0 0 8 4.5"><path d="M0.5 0.5 L4 4 L7.5 0.5" fill="none" stroke="#7a7a7a" stroke-width="1.2"/></svg>
<svg style="left:648.7px;top:808px;" width="14" height="14" viewBox="0 0 14 14"><rect x="1" y="1" width="12" height="12" fill="none" stroke="#f0d860" stroke-width="1.1" stroke-dasharray="4 2.2"/><g fill="#e0e0e0"><rect x="0" y="0" width="2" height="2"/><rect x="12" y="0" width="2" height="2"/><rect x="0" y="12" width="2" height="2"/><rect x="12" y="12" width="2" height="2"/></g></svg>
<div style="left:667.3px;top:807.8px;height:16px;line-height:16px;font-size:12px;color:#dcdcdc;white-space:nowrap;letter-spacing:-0.414px;">Ellipse Shape</div>
<div style="left:904.5px;top:806.5px;width:21.5px;height:17px;background:#2f2f2f;border-radius:3px;"></div>
<div style="left:915px;top:806.5px;width:1px;height:17px;background:#333;"></div>
<div style="left:916px;top:806.5px;width:10.5px;height:17px;border-radius:2px;border:1px solid #7c3f96;box-sizing:border-box;"></div>
<svg style="left:906.5px;top:811.2px;" width="7" height="7" viewBox="0 0 7 7"><path d="M0.3 3.5 L3 0.5 H6.5 V6.5 H3 Z" fill="#8a7e4e"/></svg>
<svg style="left:918px;top:811.2px;" width="7" height="7" viewBox="0 0 7 7"><path d="M6.7 3.5 L4 0.5 H0.5 V6.5 H4 Z" fill="#9a4cb8"/></svg>
<svg style="left:930.5px;top:809.7px;" width="10" height="10" viewBox="0 0 10 10"><circle cx="5" cy="5" r="4" fill="none" stroke="#9a9a9a" stroke-width="1.1"/></svg>
<div style="left:496px;top:828px;width:17.5px;height:17.5px;background:#282828;border-radius:3px;"></div>
<div style="left:515px;top:828px;width:18px;height:17.5px;background:#282828;border-radius:3px;"></div>
<svg style="left:517px;top:830px;" width="14" height="14" viewBox="0 0 14 14"><path d="M12 7 A5 5 0 1 1 9.5 2.7" fill="none" stroke="#d0d0d0" stroke-width="1.3"/><path d="M4.6 6.6 L6.8 9 L12 3.2" fill="none" stroke="#d0d0d0" stroke-width="1.4"/></svg>
<div style="left:573px;top:829px;width:16px;height:16px;background:#6495ed;border-radius:2.5px;"></div>
<svg style="left:593px;top:832px;" width="15" height="10" viewBox="0 0 15 10"><path d="M0.5 5 L4 1 H13 A1.2 1.2 0 0 1 14.2 2.2 V7.8 A1.2 1.2 0 0 1 13 9 H4 Z" fill="#d8d8d8"/><circle cx="4.5" cy="5" r="1.3" fill="#333"/></svg>
<svg style="left:667.5px;top:829px;" width="15" height="16" viewBox="0 0 15 16"><rect x="1" y="6" width="9" height="9.5" fill="#8fbcf5"/><path d="M5.5 8.5 V13.5" stroke="#333" stroke-width="1.4"/><path d="M11 0.5 L11.8 3 L14.3 3.8 L11.8 4.6 L11 7.1 L10.2 4.6 L7.7 3.8 L10.2 3 Z" fill="#e0e0e0"/></svg>
<div style="left:686.7px;top:829.8px;height:16px;line-height:16px;font-size:12px;color:#dcdcdc;white-space:nowrap;letter-spacing:-0.033px;">Index Context [Number]</div>
<div style="left:904.5px;top:828.5px;width:21.5px;height:17px;background:#2f2f2f;border-radius:3px;"></div>
<div style="left:915px;top:828.5px;width:1px;height:17px;background:#333;"></div>
<svg style="left:906.5px;top:833.2px;" width="7" height="7" viewBox="0 0 7 7"><path d="M0.3 3.5 L3 0.5 H6.5 V6.5 H3 Z" fill="#5a5a5a"/></svg>
<svg style="left:918px;top:833.2px;" width="7" height="7" viewBox="0 0 7 7"><path d="M6.7 3.5 L4 0.5 H0.5 V6.5 H4 Z" fill="#9a4cb8"/></svg>
<svg style="left:930.5px;top:831.7px;" width="10" height="10" viewBox="0 0 10 10"><circle cx="5" cy="5" r="4" fill="none" stroke="#9a9a9a" stroke-width="1.1"/></svg>
<div style="left:496px;top:850px;width:17.5px;height:17.5px;background:#282828;border-radius:3px;"></div>
<div style="left:515px;top:850px;width:18px;height:17.5px;background:#282828;border-radius:3px;"></div>
<svg style="left:517px;top:852px;" width="14" height="14" viewBox="0 0 14 14"><path d="M12 7 A5 5 0 1 1 9.5 2.7" fill="none" stroke="#d0d0d0" stroke-width="1.3"/><path d="M4.6 6.6 L6.8 9 L12 3.2" fill="none" stroke="#d0d0d0" stroke-width="1.4"/></svg>
<div style="left:573px;top:851px;width:16px;height:16px;background:#6495ed;border-radius:2.5px;"></div>
<svg style="left:593px;top:854px;" width="15" height="10" viewBox="0 0 15 10"><path d="M0.5 5 L4 1 H13 A1.2 1.2 0 0 1 14.2 2.2 V7.8 A1.2 1.2 0 0 1 13 9 H4 Z" fill="#d8d8d8"/><circle cx="4.5" cy="5" r="1.3" fill="#333"/></svg>
<svg style="left:666.5px;top:853px;" width="16" height="12" viewBox="0 0 16 12"><path d="M0 11 H15" stroke="#8fbcf5" stroke-width="1.1" stroke-dasharray="2.5 1.5"/><path d="M1 4 H4.5 V8 H1 Z M4.5 4 V8 M6 1 V8 H9.5 V4.5 H6 M14.5 4.5 H11.5 V8 H14.5" fill="none" stroke="#d8d8d8" stroke-width="1"/></svg>
<div style="left:686.7px;top:851.8px;height:16px;line-height:16px;font-size:12px;color:#dcdcdc;white-space:nowrap;letter-spacing:-0.042px;">String Generator [String]</div>
<div style="left:904.5px;top:850.5px;width:21.5px;height:17px;background:#2f2f2f;border-radius:3px;"></div>
<div style="left:915px;top:850.5px;width:1px;height:17px;background:#333;"></div>
<svg style="left:906.5px;top:855.2px;" width="7" height="7" viewBox="0 0 7 7"><path d="M0.3 3.5 L3 0.5 H6.5 V6.5 H3 Z" fill="#8a7e4e"/></svg>
<svg style="left:918px;top:855.2px;" width="7" height="7" viewBox="0 0 7 7"><path d="M6.7 3.5 L4 0.5 H0.5 V6.5 H4 Z" fill="#9a4cb8"/></svg>
<svg style="left:930.5px;top:853.7px;" width="10" height="10" viewBox="0 0 10 10"><circle cx="5" cy="5" r="4" fill="none" stroke="#9a9a9a" stroke-width="1.1"/></svg>
<div style="left:496px;top:872px;width:17.5px;height:17.5px;background:#282828;border-radius:3px;"></div>
<div style="left:515px;top:872px;width:18px;height:17.5px;background:#282828;border-radius:3px;"></div>
<svg style="left:517px;top:876.5px;" width="14" height="9" viewBox="0 0 14 9"><path d="M0.6 4.5 Q7 -2.5 13.4 4.5 Q7 11.5 0.6 4.5 Z" fill="none" stroke="#4a4a4a" stroke-width="1.1"/><circle cx="7" cy="4.5" r="2.2" fill="#4a4a4a"/></svg>
<div style="left:534.5px;top:872px;width:17.5px;height:17.5px;background:#282828;border-radius:3px;"></div>
<div style="left:573px;top:873px;width:16px;height:16px;background:#b88dff;border-radius:2.5px;"></div>
<svg style="left:593px;top:876px;" width="15" height="10" viewBox="0 0 15 10"><path d="M0.5 5 L4 1 H13 A1.2 1.2 0 0 1 14.2 2.2 V7.8 A1.2 1.2 0 0 1 13 9 H4 Z" fill="#d8d8d8"/><circle cx="4.5" cy="5" r="1.3" fill="#333"/></svg>
<svg style="left:666.5px;top:873px;" width="16" height="16" viewBox="0 0 16 16"><path d="M1 4 V1 H4 M12 1 H15 V4 M15 12 V15 H12 M4 15 H1 V12" fill="none" stroke="#e0e0e0" stroke-width="1"/><path d="M1 5.5 V10.5 M15 5.5 V10.5" stroke="#e0e0e0" stroke-width="1" stroke-dasharray="2 1.5"/><path d="M4 4 H12 V6 H9.2 V12.5 H6.8 V6 H4 Z" fill="#f0d860"/></svg>
<div style="left:686.7px;top:873.8px;height:16px;line-height:16px;font-size:12px;color:#dcdcdc;white-space:nowrap;letter-spacing:-0.196px;">Cavalry</div>
<div style="left:904.5px;top:872.5px;width:21.5px;height:17px;background:#2f2f2f;border-radius:3px;"></div>
<div style="left:915px;top:872.5px;width:1px;height:17px;background:#333;"></div>
<svg style="left:906.5px;top:877.2px;" width="7" height="7" viewBox="0 0 7 7"><path d="M0.3 3.5 L3 0.5 H6.5 V6.5 H3 Z" fill="#8a7e4e"/></svg>
<svg style="left:918px;top:877.2px;" width="7" height="7" viewBox="0 0 7 7"><path d="M6.7 3.5 L4 0.5 H0.5 V6.5 H4 Z" fill="#5a5a5a"/></svg>
<svg style="left:930.5px;top:875.7px;" width="10" height="10" viewBox="0 0 10 10"><circle cx="5" cy="5" r="4" fill="none" stroke="#9a9a9a" stroke-width="1.1"/></svg>
<div style="left:620px;top:778.5px;width:222.5px;height:29.5px;border:3px solid #b5e61d;box-sizing:border-box;"></div>
<div style="left:494px;top:962px;width:465px;height:14px;background:#2e2e2e;"></div>
<div style="left:495px;top:964px;width:449px;height:10px;background:#505050;border-radius:5px;"></div>
<div style="left:494px;top:976px;width:465px;height:22px;background:#444;"></div>
<div style="left:497.5px;top:977.5px;width:19px;height:19px;background:#2b2b2b;border-radius:4px;border:1px solid #1d1d1d;box-sizing:border-box;border-top-color:#5e5e5e;"></div>
<svg style="left:499.5px;top:982px;" width="15" height="10" viewBox="0 0 15 10"><path d="M0.5 5 L4 1 H13 A1.2 1.2 0 0 1 14.2 2.2 V7.8 A1.2 1.2 0 0 1 13 9 H4 Z" fill="#d8d8d8"/><circle cx="4.5" cy="5" r="1.3" fill="#2b2b2b"/></svg>
<div style="left:520.7px;top:980px;height:16px;line-height:16px;font-size:12px;color:#dcdcdc;white-space:nowrap;letter-spacing:-0.270px;">1 selected</div>
<div style="left:750.5px;top:977.5px;width:19px;height:19px;background:#2b2b2b;border-radius:4px;border:1px solid #1d1d1d;box-sizing:border-box;border-top-color:#5e5e5e;"></div>
<svg style="left:750.5px;top:977.5px;" width="19" height="19" viewBox="0 0 19 19"><rect x="4" y="4" width="11" height="10.5" fill="none" stroke="#d8d8d8" stroke-width="1.1"/><rect x="8" y="7.7" width="3" height="3" fill="#d8d8d8"/></svg>
<div style="left:773.5px;top:977.5px;width:182.5px;height:19px;background:#5a5a5a;border-radius:4px;"></div>
<div style="left:774px;top:978px;width:86px;height:18px;background:#262626;border-radius:3px;"></div>
<svg style="left:780.5px;top:982px;" width="12" height="10" viewBox="0 0 12 10"><path d="M1 1 H12 M3 5 H10 M0 9 H11" stroke="#35c96b" stroke-width="1.7"/></svg>
<div style="left:796.7px;top:980px;height:16px;line-height:16px;font-size:12px;color:#dcdcdc;white-space:nowrap;letter-spacing:-0.082px;">Time Editor</div>
<svg style="left:868px;top:981px;" width="12" height="12" viewBox="0 0 12 12"><path d="M2.5 1 V12 M0.5 10 H12 M2.5 10 L11 2.5" fill="none" stroke="#c8c8c8" stroke-width="1"/></svg>
<div style="left:885px;top:980px;height:16px;line-height:16px;font-size:12px;color:#dcdcdc;white-space:nowrap;letter-spacing:-0.061px;">Graph Editor</div>
<div style="left:961.5px;top:806.5px;width:1.5px;height:1.5px;background:#9a9a9a;"></div>
<div style="left:961.5px;top:809.6px;width:1.5px;height:1.5px;background:#9a9a9a;"></div>
<div style="left:961.5px;top:812.7px;width:1.5px;height:1.5px;background:#9a9a9a;"></div>
<div style="left:961.5px;top:815.8px;width:1.5px;height:1.5px;background:#9a9a9a;"></div>
<div style="left:961.5px;top:818.9px;width:1.5px;height:1.5px;background:#9a9a9a;"></div>
<div style="left:961.5px;top:822px;width:1.5px;height:1.5px;background:#9a9a9a;"></div>
<div style="left:959px;top:630px;width:4px;height:347px;background:#262626;"></div>
<div style="left:963px;top:630px;width:951px;height:332px;background:#1c1c1c;"></div>
<div style="left:975px;top:671px;width:930px;height:291px;background:#28282a;"></div>
<div style="left:966px;top:694px;width:948px;height:22px;background:#2a2a2a;"></div>
<div style="left:966px;top:630px;width:948px;height:24.5px;background:#242424;"></div>
<div style="left:974.1px;top:630.7px;height:16px;line-height:16px;font-size:12px;color:#d0d0d0;white-space:nowrap;transform:translateX(-50%);">0</div>
<div style="left:1029.95px;top:630.7px;height:16px;line-height:16px;font-size:12px;color:#d0d0d0;white-space:nowrap;letter-spacing:-0.173px;transform:translateX(-50%);">15</div>
<div style="left:1085.8px;top:630.7px;height:16px;line-height:16px;font-size:12px;color:#d0d0d0;white-space:nowrap;letter-spacing:-0.173px;transform:translateX(-50%);">30</div>
<div style="left:1141.65px;top:630.7px;height:16px;line-height:16px;font-size:12px;color:#d0d0d0;white-space:nowrap;letter-spacing:-0.173px;transform:translateX(-50%);">45</div>
<div style="left:1197.5px;top:630.7px;height:16px;line-height:16px;font-size:12px;color:#d0d0d0;white-space:nowrap;letter-spacing:-0.173px;transform:translateX(-50%);">60</div>
<div style="left:1253.35px;top:630.7px;height:16px;line-height:16px;font-size:12px;color:#d0d0d0;white-space:nowrap;letter-spacing:-0.173px;transform:translateX(-50%);">75</div>
<div style="left:1309.2px;top:630.7px;height:16px;line-height:16px;font-size:12px;color:#d0d0d0;white-space:nowrap;letter-spacing:-0.173px;transform:translateX(-50%);">90</div>
<div style="left:1365.05px;top:630.7px;height:16px;line-height:16px;font-size:12px;color:#d0d0d0;white-space:nowrap;letter-spacing:0.094px;transform:translateX(-50%);">105</div>
<div style="left:1420.9px;top:630.7px;height:16px;line-height:16px;font-size:12px;color:#d0d0d0;white-space:nowrap;letter-spacing:0.094px;transform:translateX(-50%);">120</div>
<div style="left:1476.75px;top:630.7px;height:16px;line-height:16px;font-size:12px;color:#d0d0d0;white-space:nowrap;letter-spacing:0.094px;transform:translateX(-50%);">135</div>
<div style="left:1532.59px;top:630.7px;height:16px;line-height:16px;font-size:12px;color:#d0d0d0;white-space:nowrap;letter-spacing:0.094px;transform:translateX(-50%);">150</div>
<div style="left:1588.44px;top:630.7px;height:16px;line-height:16px;font-size:12px;color:#d0d0d0;white-space:nowrap;letter-spacing:0.094px;transform:translateX(-50%);">165</div>
<div style="left:1644.29px;top:630.7px;height:16px;line-height:16px;font-size:12px;color:#d0d0d0;white-space:nowrap;letter-spacing:0.094px;transform:translateX(-50%);">180</div>
<div style="left:1700.14px;top:630.7px;height:16px;line-height:16px;font-size:12px;color:#d0d0d0;white-space:nowrap;letter-spacing:0.094px;transform:translateX(-50%);">195</div>
<div style="left:1755.99px;top:630.7px;height:16px;line-height:16px;font-size:12px;color:#d0d0d0;white-space:nowrap;letter-spacing:0.094px;transform:translateX(-50%);">210</div>
<div style="left:1811.84px;top:630.7px;height:16px;line-height:16px;font-size:12px;color:#d0d0d0;white-space:nowrap;letter-spacing:0.094px;transform:translateX(-50%);">225</div>
<div style="left:1867.69px;top:630.7px;height:16px;line-height:16px;font-size:12px;color:#d0d0d0;white-space:nowrap;letter-spacing:0.094px;transform:translateX(-50%);">240</div>
<svg style="left:966px;top:646px;overflow:hidden;" width="947" height="9" viewBox="0 0 947 9"><rect x="8.4" y="0" width="1.3" height="8.5" fill="#8a8a8a"/><rect x="19.6" y="4" width="1.2" height="4.5" fill="#707070"/><rect x="30.7" y="4" width="1.2" height="4.5" fill="#707070"/><rect x="41.9" y="4" width="1.2" height="4.5" fill="#707070"/><rect x="53.1" y="4" width="1.2" height="4.5" fill="#707070"/><rect x="64.2" y="0" width="1.3" height="8.5" fill="#8a8a8a"/><rect x="75.4" y="4" width="1.2" height="4.5" fill="#707070"/><rect x="86.6" y="4" width="1.2" height="4.5" fill="#707070"/><rect x="97.8" y="4" width="1.2" height="4.5" fill="#707070"/><rect x="108.9" y="4" width="1.2" height="4.5" fill="#707070"/><rect x="120.1" y="0" width="1.3" height="8.5" fill="#8a8a8a"/><rect x="131.3" y="4" width="1.2" height="4.5" fill="#707070"/><rect x="142.4" y="4" width="1.2" height="4.5" fill="#707070"/><rect x="153.6" y="4" width="1.2" height="4.5" fill="#707070"/><rect x="164.8" y="4" width="1.2" height="4.5" fill="#707070"/><rect x="175.9" y="0" width="1.3" height="8.5" fill="#8a8a8a"/><rect x="187.1" y="4" width="1.2" height="4.5" fill="#707070"/><rect x="198.3" y="4" width="1.2" height="4.5" fill="#707070"/><rect x="209.5" y="4" width="1.2" height="4.5" fill="#707070"/><rect x="220.6" y="4" width="1.2" height="4.5" fill="#707070"/><rect x="231.8" y="0" width="1.3" height="8.5" fill="#8a8a8a"/><rect x="243.0" y="4" width="1.2" height="4.5" fill="#707070"/><rect x="254.1" y="4" width="1.2" height="4.5" fill="#707070"/><rect x="265.3" y="4" width="1.2" height="4.5" fill="#707070"/><rect x="276.5" y="4" width="1.2" height="4.5" fill="#707070"/><rect x="287.6" y="0" width="1.3" height="8.5" fill="#8a8a8a"/><rect x="298.8" y="4" width="1.2" height="4.5" fill="#707070"/><rect x="310.0" y="4" width="1.2" height="4.5" fill="#707070"/><rect x="321.2" y="4" width="1.2" height="4.5" fill="#707070"/><rect x="332.3" y="4" width="1.2" height="4.5" fill="#707070"/><rect x="343.5" y="0" width="1.3" height="8.5" fill="#8a8a8a"/><rect x="354.7" y="4" width="1.2" height="4.5" fill="#707070"/><rect x="365.8" y="4" width="1.2" height="4.5" fill="#707070"/><rect x="377.0" y="4" width="1.2" height="4.5" fill="#707070"/><rect x="388.2" y="4" width="1.2" height="4.5" fill="#707070"/><rect x="399.3" y="0" width="1.3" height="8.5" fill="#8a8a8a"/><rect x="410.5" y="4" width="1.2" height="4.5" fill="#707070"/><rect x="421.7" y="4" width="1.2" height="4.5" fill="#707070"/><rect x="432.9" y="4" width="1.2" height="4.5" fill="#707070"/><rect x="444.0" y="4" width="1.2" height="4.5" fill="#707070"/><rect x="455.2" y="0" width="1.3" height="8.5" fill="#8a8a8a"/><rect x="466.4" y="4" width="1.2" height="4.5" fill="#707070"/><rect x="477.5" y="4" width="1.2" height="4.5" fill="#707070"/><rect x="488.7" y="4" width="1.2" height="4.5" fill="#707070"/><rect x="499.9" y="4" width="1.2" height="4.5" fill="#707070"/><rect x="511.0" y="0" width="1.3" height="8.5" fill="#8a8a8a"/><rect x="522.2" y="4" width="1.2" height="4.5" fill="#707070"/><rect x="533.4" y="4" width="1.2" height="4.5" fill="#707070"/><rect x="544.6" y="4" width="1.2" height="4.5" fill="#707070"/><rect x="555.7" y="4" width="1.2" height="4.5" fill="#707070"/><rect x="566.9" y="0" width="1.3" height="8.5" fill="#8a8a8a"/><rect x="578.1" y="4" width="1.2" height="4.5" fill="#707070"/><rect x="589.2" y="4" width="1.2" height="4.5" fill="#707070"/><rect x="600.4" y="4" width="1.2" height="4.5" fill="#707070"/><rect x="611.6" y="4" width="1.2" height="4.5" fill="#707070"/><rect x="622.7" y="0" width="1.3" height="8.5" fill="#8a8a8a"/><rect x="633.9" y="4" width="1.2" height="4.5" fill="#707070"/><rect x="645.1" y="4" width="1.2" height="4.5" fill="#707070"/><rect x="656.3" y="4" width="1.2" height="4.5" fill="#707070"/><rect x="667.4" y="4" width="1.2" height="4.5" fill="#707070"/><rect x="678.6" y="0" width="1.3" height="8.5" fill="#8a8a8a"/><rect x="689.8" y="4" width="1.2" height="4.5" fill="#707070"/><rect x="700.9" y="4" width="1.2" height="4.5" fill="#707070"/><rect x="712.1" y="4" width="1.2" height="4.5" fill="#707070"/><rect x="723.3" y="4" width="1.2" height="4.5" fill="#707070"/><rect x="734.4" y="0" width="1.3" height="8.5" fill="#8a8a8a"/><rect x="745.6" y="4" width="1.2" height="4.5" fill="#707070"/><rect x="756.8" y="4" width="1.2" height="4.5" fill="#707070"/><rect x="768.0" y="4" width="1.2" height="4.5" fill="#707070"/><rect x="779.1" y="4" width="1.2" height="4.5" fill="#707070"/><rect x="790.3" y="0" width="1.3" height="8.5" fill="#8a8a8a"/><rect x="801.5" y="4" width="1.2" height="4.5" fill="#707070"/><rect x="812.6" y="4" width="1.2" height="4.5" fill="#707070"/><rect x="823.8" y="4" width="1.2" height="4.5" fill="#707070"/><rect x="835.0" y="4" width="1.2" height="4.5" fill="#707070"/><rect x="846.1" y="0" width="1.3" height="8.5" fill="#8a8a8a"/><rect x="857.3" y="4" width="1.2" height="4.5" fill="#707070"/><rect x="868.5" y="4" width="1.2" height="4.5" fill="#707070"/><rect x="879.7" y="4" width="1.2" height="4.5" fill="#707070"/><rect x="890.8" y="4" width="1.2" height="4.5" fill="#707070"/><rect x="902.0" y="0" width="1.3" height="8.5" fill="#8a8a8a"/><rect x="913.2" y="4" width="1.2" height="4.5" fill="#707070"/><rect x="924.3" y="4" width="1.2" height="4.5" fill="#707070"/><rect x="935.5" y="4" width="1.2" height="4.5" fill="#707070"/></svg>
<div style="left:975px;top:654.5px;width:930px;height:15.5px;background:#464646;"></div>
<div style="left:970px;top:653px;width:5.3px;height:18px;background:#6fc4b0;border-radius:1.5px;"></div>
<div style="left:1905px;top:653px;width:5.3px;height:18px;background:#7fd4b0;border-radius:1.5px;"></div>
<div style="left:966px;top:962px;width:948px;height:14px;background:#2e2e2e;"></div>
<div style="left:975px;top:674px;width:929.5px;height:18px;background:#72e3a1;border-radius:2px;background:repeating-linear-gradient(136.4deg,#63cb92 0,#63cb92 1.9px,#86f5b6 2.3px,#86f5b6 3.1px,#72e3a1 3.6px,#72e3a1 14.1px,#86f5b6 14.6px,#86f5b6 15.2px,#6ad69a 16.4px,#63cb92 19.2px,#63cb92 24.4px);"></div>
<div style="left:982.7px;top:675px;height:16px;line-height:16px;font-size:12px;color:#1c1c1c;white-space:nowrap;letter-spacing:0.180px;">Color Array</div>
<div style="left:975px;top:696px;width:929.5px;height:18px;background:#c9f07e;border-radius:2px;background:repeating-linear-gradient(136.4deg,#b3db6f 0,#b3db6f 1.9px,#ddff90 2.3px,#ddff90 3.1px,#c9f07e 3.6px,#c9f07e 14.1px,#ddff90 14.6px,#ddff90 15.2px,#bfe676 16.4px,#b3db6f 19.2px,#b3db6f 24.4px);"></div>
<div style="left:982.7px;top:697px;height:16px;line-height:16px;font-size:12px;color:#1c1c1c;white-space:nowrap;letter-spacing:-0.122px;">Random [Index]</div>
<div style="left:975px;top:718px;width:929.5px;height:18px;background:#c9f07e;border-radius:2px;background:repeating-linear-gradient(136.4deg,#b3db6f 0,#b3db6f 1.9px,#ddff90 2.3px,#ddff90 3.1px,#c9f07e 3.6px,#c9f07e 14.1px,#ddff90 14.6px,#ddff90 15.2px,#bfe676 16.4px,#b3db6f 19.2px,#b3db6f 24.4px);"></div>
<div style="left:982.7px;top:719px;height:16px;line-height:16px;font-size:12px;color:#1c1c1c;white-space:nowrap;letter-spacing:-0.035px;">Oscillator [Position.Z] Cosine</div>
<div style="left:975px;top:740px;width:929.5px;height:18px;background:#c9f07e;border-radius:2px;background:repeating-linear-gradient(136.4deg,#b3db6f 0,#b3db6f 1.9px,#ddff90 2.3px,#ddff90 3.1px,#c9f07e 3.6px,#c9f07e 14.1px,#ddff90 14.6px,#ddff90 15.2px,#bfe676 16.4px,#b3db6f 19.2px,#b3db6f 24.4px);"></div>
<div style="left:982.7px;top:741px;height:16px;line-height:16px;font-size:12px;color:#1c1c1c;white-space:nowrap;letter-spacing:-0.064px;">Oscillator [Position.X] Sine</div>
<div style="left:975px;top:762px;width:929.5px;height:18px;background:#c9f07e;border-radius:2px;background:repeating-linear-gradient(136.4deg,#b3db6f 0,#b3db6f 1.9px,#ddff90 2.3px,#ddff90 3.1px,#c9f07e 3.6px,#c9f07e 14.1px,#ddff90 14.6px,#ddff90 15.2px,#bfe676 16.4px,#b3db6f 19.2px,#b3db6f 24.4px);"></div>
<div style="left:982.7px;top:763px;height:16px;line-height:16px;font-size:12px;color:#1c1c1c;white-space:nowrap;letter-spacing:0.211px;">3D Matrix [Duplicator]</div>
<div style="left:975px;top:784px;width:929.5px;height:18.5px;background:#f4dc78;border-radius:3px;border:1px solid #ffffff;box-sizing:border-box;background-image:radial-gradient(circle at 1px 1px,#ccb650 0.45px,rgba(204,182,80,0) 0.9px),radial-gradient(circle at 1px 1px,#ccb650 0.45px,rgba(204,182,80,0) 0.9px);background-size:5.86px 3px;background-position:0.6px 0.5px,3.53px 2px;background-color:#fff487;"></div>
<div style="left:982.7px;top:785px;height:16px;line-height:16px;font-size:12px;color:#1c1c1c;white-space:nowrap;letter-spacing:0.158px;">Duplicator</div>
<div style="left:975px;top:806px;width:929.5px;height:18px;background:#ffe57f;border-radius:3px;"></div>
<div style="left:982.7px;top:807px;height:16px;line-height:16px;font-size:12px;color:#1c1c1c;white-space:nowrap;letter-spacing:-0.391px;">Ellipse Shape</div>
<div style="left:975px;top:828px;width:929.5px;height:18px;background:#6a9af2;border-radius:2px;background:repeating-linear-gradient(136.4deg,#5b84d6 0,#5b84d6 1.9px,#7cb0ff 2.3px,#7cb0ff 3.1px,#6a9af2 3.6px,#6a9af2 14.1px,#7cb0ff 14.6px,#7cb0ff 15.2px,#628fe4 16.4px,#5b84d6 19.2px,#5b84d6 24.4px);"></div>
<div style="left:982.7px;top:829px;height:16px;line-height:16px;font-size:12px;color:#ffffff;white-space:nowrap;letter-spacing:0.058px;text-shadow:0 0 0.6px #fff;">Index Context [Number]</div>
<div style="left:975px;top:850px;width:929.5px;height:18px;background:#6a9af2;border-radius:2px;background:repeating-linear-gradient(136.4deg,#5b84d6 0,#5b84d6 1.9px,#7cb0ff 2.3px,#7cb0ff 3.1px,#6a9af2 3.6px,#6a9af2 14.1px,#7cb0ff 14.6px,#7cb0ff 15.2px,#628fe4 16.4px,#5b84d6 19.2px,#5b84d6 24.4px);"></div>
<div style="left:982.7px;top:851px;height:16px;line-height:16px;font-size:12px;color:#ffffff;white-space:nowrap;letter-spacing:-0.002px;text-shadow:0 0 0.6px #fff;">String Generator [String]</div>
<div style="left:975px;top:872px;width:929.5px;height:18px;background:#b98fff;border-radius:3px;"></div>
<div style="left:982.7px;top:873px;height:16px;line-height:16px;font-size:12px;color:#ffffff;white-space:nowrap;letter-spacing:-0.011px;text-shadow:0 0 0.6px #fff;">Cavalry</div>
<div style="left:1298px;top:654px;width:1.2px;height:308px;background:#7fd4b0;"></div>
<svg style="left:1291px;top:643.5px;" width="15" height="10.5" viewBox="0 0 15 10.5"><path d="M0.5 0.5 H14.5 L7.6 10 Z" fill="#7fd4b0"/></svg>
<div style="left:967px;top:964px;width:946px;height:10px;background:#505050;border-radius:5px;"></div>
<div style="left:966px;top:976px;width:948px;height:22px;background:#444;"></div>
<div style="left:970px;top:977.5px;width:18px;height:19px;background:#2b2b2b;border-radius:4px;border:1px solid #1d1d1d;box-sizing:border-box;border-top-color:#5e5e5e;"></div>
<svg style="left:970px;top:977.5px;" width="18" height="19" viewBox="0 0 18 19"><path d="M3 4 H15 M3 8 H15" stroke="#e0e0e0" stroke-width="1.5"/><path d="M3 12 H15 M3 15.5 H12" stroke="#e0e0e0" stroke-width="1.3" stroke-dasharray="3 1.5"/><path d="M15.9 13.4 V16.4 H12.9 Z" fill="#62d3a4"/></svg>
<div style="left:990px;top:979px;width:150px;height:17px;background:#2a2a2a;border-radius:3px;"></div>
<div style="left:992.3px;top:980px;height:16px;line-height:16px;font-size:12px;color:#dcdcdc;white-space:nowrap;letter-spacing:-0.093px;">Default Keyframe Layer</div>
<div style="left:1146px;top:979px;width:70px;height:17px;background:#2a2a2a;border-radius:3px;"></div>
<div style="left:1151px;top:980.5px;height:15px;line-height:15px;font-size:11.5px;color:#555;white-space:nowrap;">F</div>
<div style="left:1163px;top:980px;height:16px;line-height:16px;font-size:12px;color:#dcdcdc;white-space:nowrap;">-</div>
<div style="left:1222.3px;top:980px;height:16px;line-height:16px;font-size:12px;color:#dcdcdc;white-space:nowrap;letter-spacing:-0.086px;">Align:</div>
<div style="left:1259px;top:977.5px;width:52.5px;height:19px;background:#2b2b2b;border-radius:4px;border:1px solid #1d1d1d;box-sizing:border-box;border-top-color:#555;"></div>
<svg style="left:1259px;top:978px;" width="17.5" height="18" viewBox="0 0 17.5 18"><path d="M3.5 3 V15" stroke="#e4e4e4" stroke-width="1.2"/><path d="M6 6.5 H8 M10 6.5 H13 M6 12.5 H14" stroke="#e4e4e4" stroke-width="1.6"/></svg>
<svg style="left:1276.5px;top:978px;" width="17.5" height="18" viewBox="0 0 17.5 18"><path d="M8.7 2.5 V15.5" stroke="#35c96b" stroke-width="1.1" stroke-dasharray="3 1.5"/><path d="M4 6.5 H7 M10.5 6.5 H13 M3 12.5 H14.5" stroke="#e4e4e4" stroke-width="1.6"/></svg>
<div style="left:1276px;top:978.5px;width:1px;height:17px;background:#1d1d1d;"></div>
<svg style="left:1294px;top:978px;" width="17.5" height="18" viewBox="0 0 17.5 18"><path d="M14 3 V15" stroke="#e4e4e4" stroke-width="1.2"/><path d="M5 6.5 H7.5 M9.5 6.5 H11.5 M3.5 12.5 H11.5" stroke="#e4e4e4" stroke-width="1.6"/></svg>
<div style="left:1293.5px;top:978.5px;width:1px;height:17px;background:#1d1d1d;"></div>
<div style="left:1315.5px;top:977.5px;width:17px;height:19px;background:#2b2b2b;border-radius:4px;border:1px solid #1d1d1d;box-sizing:border-box;border-top-color:#5e5e5e;"></div>
<svg style="left:1315.5px;top:977.5px;" width="17" height="19" viewBox="0 0 17 19"><rect x="3.5" y="4" width="10" height="10" fill="none" stroke="#e4e4e4" stroke-width="1" stroke-dasharray="2 1.6"/><g fill="#e4e4e4"><rect x="2" y="2.5" width="3" height="3"/><rect x="12" y="2.5" width="3" height="3"/><rect x="2" y="12.5" width="3" height="3"/><rect x="12" y="12.5" width="3" height="3"/><rect x="7.5" y="8" width="2" height="2"/></g></svg>
<div style="left:1336.5px;top:977.5px;width:31px;height:19px;background:#2b2b2b;border-radius:4px;border:1px solid #1d1d1d;box-sizing:border-box;border-top-color:#555;"></div>
<div style="left:1337.5px;top:978.5px;width:18.5px;height:17px;background:#3b3b3b;border-radius:3px 0 0 3px;"></div>
<svg style="left:1336.5px;top:977.5px;" width="19" height="19" viewBox="0 0 19 19"><path d="M6 15 L3.5 9 A5 5 0 0 1 12 5 L15 8.5" fill="none" stroke="#e4e4e4" stroke-width="2.6"/><path d="M4.5 15.8 L8 14.3 M13 9.8 L16 7.5" stroke="#3b3b3b" stroke-width="1"/></svg>
<div style="left:1356px;top:978.5px;width:1px;height:17px;background:#1d1d1d;"></div>
<svg style="left:1358px;top:982.5px;" width="8" height="9" viewBox="0 0 8 9"><path d="M1.5 1 L6.5 4.5 L1.5 8 Z" fill="none" stroke="#8a8a8a" stroke-width="1"/></svg>
<div style="left:1371.5px;top:977.5px;width:31px;height:19px;background:#2b2b2b;border-radius:4px;border:1px solid #1d1d1d;box-sizing:border-box;border-top-color:#555;"></div>
<div style="left:1372.5px;top:978.5px;width:18.5px;height:17px;background:#3b3b3b;border-radius:3px 0 0 3px;"></div>
<svg style="left:1371.5px;top:977.5px;" width="19" height="19" viewBox="0 0 19 19"><path d="M9.5 3.5 V15.5" stroke="#e4e4e4" stroke-width="1.2"/><path d="M7 7 V12 M12 7 V12" stroke="#e4e4e4" stroke-width="1"/><path d="M2.5 9.5 H5.5 M13.5 9.5 H16.5" stroke="#e4e4e4" stroke-width="1"/></svg>
<div style="left:1391px;top:978.5px;width:1px;height:17px;background:#1d1d1d;"></div>
<svg style="left:1393px;top:982.5px;" width="8" height="9" viewBox="0 0 8 9"><path d="M1.5 1 L6.5 4.5 L1.5 8 Z" fill="none" stroke="#8a8a8a" stroke-width="1"/></svg>
<svg style="left:1743px;top:979.5px;" width="15" height="15" viewBox="0 0 15 15"><circle cx="6.5" cy="6.5" r="5.3" fill="none" stroke="#d0d0d0" stroke-width="1.1"/><path d="M4 6.5 H9" stroke="#d0d0d0" stroke-width="1.1"/><path d="M10.5 10.5 L13.5 13.5" stroke="#d0d0d0" stroke-width="1.8" stroke-linecap="round"/></svg>
<div style="left:1767px;top:985px;width:115px;height:4px;background:#565656;border-radius:2px;"></div>
<div style="left:1762px;top:982px;width:10px;height:10px;background:#6fc9aa;border-radius:5px;"></div>
<div style="left:1765px;top:985px;width:4px;height:4px;background:#4d9c80;border-radius:2px;"></div>
<svg style="left:1887px;top:979.5px;" width="15" height="15" viewBox="0 0 15 15"><circle cx="6.5" cy="6.5" r="5.3" fill="none" stroke="#d0d0d0" stroke-width="1.1"/><path d="M4 6.5 H9 M6.5 4 V9" stroke="#d0d0d0" stroke-width="1.1"/><path d="M10.5 10.5 L13.5 13.5" stroke="#d0d0d0" stroke-width="1.8" stroke-linecap="round"/></svg>
<div style="left:494px;top:998px;width:1420px;height:6px;background:#121212;"></div>
<div style="left:494px;top:1004px;width:1420px;height:21.7px;background:#3c3c3c;"></div>
<div style="left:497.5px;top:1010px;width:2px;height:2px;background:#8a8a8a;"></div>
<div style="left:497.5px;top:1014.5px;width:2px;height:2px;background:#8a8a8a;"></div>
<div style="left:497.5px;top:1019px;width:2px;height:2px;background:#8a8a8a;"></div>
<div style="left:506.5px;top:1005.5px;width:17.5px;height:19px;background:#2b2b2b;border-radius:4px;border:1px solid #1d1d1d;box-sizing:border-box;border-top-color:#5e5e5e;"></div>
<svg style="left:506.5px;top:1005.5px;" width="17.5" height="19" viewBox="0 0 17.5 19"><path d="M2.8 3.5 H14.2 V12.2 H12.2 V15.2 L9.2 12.2 H2.8 Z" fill="#ececec"/><path d="M4.5 5.7 H12.5 M4.5 7.8 H12.5 M4.5 9.9 H12.5 M7 5 V10.6" stroke="#2b2b2b" stroke-width="0.8"/><path d="M15.9 14 V17 H12.9 Z" fill="#62d3a4"/></svg>
<div style="left:528px;top:1008px;width:18px;height:14px;background:#2ecc71;border-radius:2px;"></div>
<div style="left:533.8px;top:1007.3px;height:16px;line-height:16px;font-size:12px;color:#103a20;white-space:nowrap;">2</div>
<svg style="left:553px;top:1012px;" width="7" height="7" viewBox="0 0 7 7"><circle cx="3.5" cy="3.4" r="3" fill="#2ecc71"/></svg>
<div style="left:565px;top:1007.5px;height:16px;line-height:16px;font-size:12px;color:#dcdcdc;white-space:nowrap;letter-spacing:-0.243px;">Save reminder: 10 minutes since your last save.</div>
<div style="left:1482.3px;top:1007px;height:16px;line-height:16px;font-size:12px;color:#dcdcdc;white-space:nowrap;font-style:italic;letter-spacing:-0.762px;">Click to see next message</div>
<div style="left:1610px;top:1006px;width:80px;height:18px;background:#cdb464;border-radius:3px;"></div>
<div style="left:1615.5px;top:1007.5px;height:16px;line-height:16px;font-size:12px;color:#2a2410;white-space:nowrap;letter-spacing:-0.337px;">Feedback</div>
<svg style="left:1671.5px;top:1008.5px;" width="12" height="14" viewBox="0 0 12 14"><path d="M1 1 H8 L11 4 V13 H1 Z" fill="#f4f0e8" stroke="#c8c0b0" stroke-width="0.6"/><path d="M3 5 H8 M3 7.5 H7" stroke="#a0a0a0" stroke-width="0.8"/><path d="M5 11.5 L10.5 6 L12 7.5 L6.5 13 L4.5 13.5 Z" fill="#f0883a"/></svg>
<div style="left:1693px;top:1006px;width:109px;height:18px;background:#2ecc71;border-radius:3px;"></div>
<div style="left:1698.5px;top:1007.5px;height:16px;line-height:16px;font-size:12px;color:#0c3018;white-space:nowrap;letter-spacing:-0.134px;">Upgrade to Pro</div>
<svg style="left:1782px;top:1010px;" width="14" height="11" viewBox="0 0 14 11"><path d="M1 6 Q1 2 4 2.5 Q6.5 3 6.5 6.5 L5.5 10.5 H2 Z M13 6 Q13 2 10 2.5 Q7.5 3 7.5 6.5 L8.5 10.5 H12 Z" fill="#ffd23c"/></svg>
<div style="left:1805px;top:1006px;width:106px;height:18px;background:#3daef5;border-radius:3px;"></div>
<div style="left:1810.5px;top:1007.5px;height:16px;line-height:16px;font-size:12px;color:#15154a;white-space:nowrap;letter-spacing:-0.283px;">Tips and Tricks</div>
<svg style="left:1891.5px;top:1008.5px;" width="14" height="14" viewBox="0 0 14 14"><path d="M13 1 Q8 1.5 5 6 L4 8 L6 10 L8 9 Q12.5 6 13 1 Z" fill="#e8e8f0"/><circle cx="9.3" cy="4.7" r="1.3" fill="#3a78c8"/><path d="M4.5 6.5 L1.5 7 L3.5 9 Z M7.5 9.5 L7 12.5 L5 10.5 Z" fill="#e0483a"/><path d="M3.5 10.5 L1 13 L3.5 12.5 Z" fill="#ffb030"/></svg>
<div style="left:1914px;top:23px;width:6px;height:1006px;background:#1e1e1e;"></div>
<div style="left:0px;top:1025.7px;width:1920px;height:3.3px;background:#1e1e1e;"></div>
<div style="left:6px;top:264.7px;width:482px;height:1.3px;background:#2ec86e;"></div>
<div style="left:6px;top:266px;width:95px;height:21px;background:#464646;"></div>
<div style="left:11.5px;top:269px;height:16px;line-height:16px;font-size:12px;color:#dcdcdc;white-space:nowrap;letter-spacing:0.290px;">Attribute Editor</div>
<div style="left:6px;top:287px;width:482px;height:739px;background:#464646;"></div>
<div style="left:8.5px;top:289px;width:377.5px;height:20px;background:#262626;border-radius:10px;"></div>
<svg style="left:12px;top:292.5px;" width="14" height="14" viewBox="0 0 14 14"><circle cx="5.5" cy="5.5" r="4.6" fill="none" stroke="#d8d8d8" stroke-width="1.2"/><path d="M9.6 9.6 L11.4 11.4" stroke="#d8d8d8" stroke-width="2.2" stroke-linecap="round"/></svg>
<div style="left:32.5px;top:291.5px;height:16px;line-height:16px;font-size:12px;color:#888;white-space:nowrap;letter-spacing:0.041px;">Enter an Attribute name</div>
<div style="left:394px;top:289.5px;width:23px;height:19px;background:#2a2a2a;border-radius:3px;"></div>
<div style="left:396.5px;top:291.5px;height:16px;line-height:16px;font-size:12px;color:#dcdcdc;white-space:nowrap;letter-spacing:0.607px;">2/4</div>
<div style="left:420px;top:289px;width:20px;height:20px;background:#2b2b2b;border-radius:4px;border:1px solid #1d1d1d;box-sizing:border-box;border-top-color:#5e5e5e;"></div>
<svg style="left:420px;top:289px;" width="20" height="20" viewBox="0 0 20 20"><circle cx="8.5" cy="8.5" r="5" fill="none" stroke="#b0b0b0" stroke-width="1.2"/><circle cx="8.5" cy="8.5" r="2" fill="none" stroke="#b0b0b0" stroke-width="1"/><path d="M10 9.5 L10 17 L12 15 L13.5 18 L15 17.3 L13.6 14.4 L16.2 14.2 Z" fill="#d8d8d8"/></svg>
<div style="left:443px;top:289px;width:20px;height:20px;background:#2b2b2b;border-radius:4px;border:1px solid #1d1d1d;box-sizing:border-box;border-top-color:#5e5e5e;"></div>
<svg style="left:443px;top:289px;" width="20" height="20" viewBox="0 0 20 20"><path d="M4 7 H12 M7 11 H15 M10 15 H15" stroke="#d8d8d8" stroke-width="2"/><path d="M14.5 3 V8 M12 5.5 H17" stroke="#d8d8d8" stroke-width="1.2"/></svg>
<div style="left:465.5px;top:289px;width:20px;height:20px;background:#2b2b2b;border-radius:4px;border:1px solid #1d1d1d;box-sizing:border-box;border-top-color:#5e5e5e;"></div>
<svg style="left:465.5px;top:289px;" width="20" height="20" viewBox="0 0 20 20"><path d="M2.5 10 L7 5 H17 V15 H7 Z" fill="#d8d8d8"/><path d="M9.5 7.5 L14.5 12.5 M14.5 7.5 L9.5 12.5" stroke="#2b2b2b" stroke-width="1.5"/></svg>
<div style="left:7px;top:311px;width:467px;height:718px;background:#383838;"></div>
<div style="left:474px;top:311px;width:14px;height:715px;background:#333;"></div>
<div style="left:476px;top:475px;width:10px;height:502px;background:#464646;border-radius:5px;"></div>
<div style="left:6px;top:311px;width:1.3px;height:309px;background:#2ec86e;"></div>
<div style="left:7px;top:620px;width:467px;height:4px;background:#2a2a2a;"></div>
<div style="left:7px;top:311px;width:467px;height:10px;overflow:hidden">
<div style="left:23.3px;top:-8.5px;height:16px;line-height:16px;font-size:12px;color:#7e7e7e;white-space:nowrap;letter-spacing:-0.095px;">Filters</div>
<div style="left:170px;top:-8px;width:93px;height:16px;background:#333;border-radius:3px;"></div>
<div style="left:188px;top:-8px;height:16px;line-height:16px;font-size:12px;color:#7e7e7e;white-space:nowrap;">0</div>
<svg style="left:173.5px;top:-5px;" width="10" height="10" viewBox="0 0 10 10"><path d="M0 6.5 H10 M0 9.5 H8" stroke="#7a7a7a" stroke-width="1" fill="none"/></svg>
<div style="left:266.5px;top:-9px;width:15px;height:15.5px;background:#2b2b2b;border-radius:3px;"></div>
<div style="left:273.5px;top:-4px;width:1.6px;height:7px;background:#d8d8d8;"></div>
<svg style="left:278px;top:3.5px;" width="3" height="3" viewBox="0 0 3 3"><path d="M1.4 -1.6 V1.4 H-1.6 Z" fill="#62d3a4"/></svg>
</div>
<svg style="left:14px;top:327px;" width="10" height="10" viewBox="0 0 10 10"><circle cx="5" cy="5" r="4" fill="none" stroke="#707070" stroke-width="1.2"/></svg>
<div style="left:30.3px;top:324.5px;height:16px;line-height:16px;font-size:12px;color:#e4e4e4;white-space:nowrap;letter-spacing:0.165px;">Motion Blur</div>
<div style="left:178px;top:325.25px;width:192px;height:14.5px;background:#4a4a4a;border-radius:3px;"></div>
<div style="left:181px;top:325px;height:16px;line-height:16px;font-size:12px;color:#dcdcdc;white-space:nowrap;letter-spacing:-0.171px;">None</div>
<svg style="left:357px;top:330.5px;" width="9" height="5" viewBox="0 0 9 5"><path d="M0.5 0.5 L4.5 4.5 L8.5 0.5" fill="none" stroke="#c8c8c8" stroke-width="1.2"/></svg>
<div style="left:7.5px;top:345px;width:466.5px;height:1px;background:#222;"></div>
<div style="left:7.5px;top:346px;width:466.5px;height:24px;background:#3c3c3c;"></div>
<div style="left:30.3px;top:351.5px;height:16px;line-height:16px;font-size:12px;color:#767676;white-space:nowrap;letter-spacing:-0.310px;">Input Shapes</div>
<div style="left:177px;top:351.5px;width:93.5px;height:16px;background:#363636;border-radius:3px;"></div>
<svg style="left:180.5px;top:354.5px;" width="10" height="10" viewBox="0 0 10 10"><path d="M0 0.5 H10 M0 3.5 H8 M0 6.5 H10 M0 9.5 H8" stroke="#7a7a7a" stroke-width="1" fill="none"/></svg>
<div style="left:194.5px;top:352px;height:16px;line-height:16px;font-size:12px;color:#9a8c5a;white-space:nowrap;">1</div>
<div style="left:261px;top:351.5px;width:10px;height:16px;background:#3a3a3a;border-radius:0 3px 3px 0;"></div>
<svg style="left:250.5px;top:355.5px;" width="7" height="7" viewBox="0 0 7 7"><path d="M0.3 3.5 L3 0.5 H6.5 V6.5 H3 Z" fill="#a89a62"/></svg>
<svg style="left:262.5px;top:355.5px;" width="7" height="7" viewBox="0 0 7 7"><path d="M6.7 3.5 L4 0.5 H0.5 V6.5 H4 Z" fill="#6a6a6a"/></svg>
<div style="left:273.5px;top:351.5px;width:15.5px;height:15.5px;background:#2b2b2b;border-radius:4px;border:1px solid #1d1d1d;box-sizing:border-box;border-top-color:#5e5e5e;"></div>
<svg style="left:273.5px;top:351.5px;" width="15.5" height="15.5" viewBox="0 0 15.5 15.5"><path d="M7.75 3.5 V12 M3.5 7.75 H12" stroke="#e8e8e8" stroke-width="1.6"/><path d="M13.4 10.4 V13.4 H10.4 Z" fill="#62d3a4"/></svg>
<div style="left:30.3px;top:375.5px;height:16px;line-height:16px;font-size:12px;color:#767676;white-space:nowrap;letter-spacing:0.248px;">Distribution</div>
<div style="left:178px;top:376px;width:192px;height:15px;background:#2d2d2d;border-radius:3px;"></div>
<div style="left:185.5px;top:382.5px;width:1.5px;height:1.5px;background:#d0d0d0;"></div>
<div style="left:196.5px;top:376px;height:16px;line-height:16px;font-size:12px;color:#8a8a8a;white-space:nowrap;letter-spacing:0.030px;">Point</div>
<svg style="left:360px;top:381.5px;" width="9" height="5" viewBox="0 0 9 5"><path d="M0.5 0.5 L4.5 4.5 L8.5 0.5" fill="none" stroke="#8a8a8a" stroke-width="1.2"/></svg>
<div style="left:22px;top:395px;width:450px;height:20px;background:#474747;border-radius:3px;"></div>
<svg style="left:30px;top:400px;" width="10" height="10" viewBox="0 0 10 10"><circle cx="5" cy="5" r="4" fill="none" stroke="#8a8a8a" stroke-width="1.2"/><circle cx="5" cy="5" r="2.2" fill="#3daef5"/></svg>
<div style="left:46px;top:397.5px;height:16px;line-height:16px;font-size:12px;color:#3daee9;white-space:nowrap;letter-spacing:-0.004px;">Count</div>
<div style="left:177px;top:397.5px;width:94px;height:15px;background:#363636;border-radius:3px;"></div>
<div style="left:261px;top:397.5px;width:10px;height:15px;background:#3c3c3c;border-radius:0 3px 3px 0;"></div>
<div style="left:195px;top:397.5px;height:16px;line-height:16px;font-size:12px;color:#b4b4b4;white-space:nowrap;letter-spacing:-0.423px;">15</div>
<svg style="left:249.5px;top:401px;" width="8" height="8" viewBox="0 0 8 8"><path d="M4 0.8 L7.2 4 L4 7.2 L0.8 4 Z" fill="none" stroke="#a8a8a8" stroke-width="1.1"/></svg>
<svg style="left:262.5px;top:401.5px;" width="7" height="7" viewBox="0 0 7 7"><path d="M6.7 3.5 L4 0.5 H0.5 V6.5 H4 Z" fill="#7a7a7a"/></svg>
<svg style="left:14px;top:428px;" width="10" height="10" viewBox="0 0 10 10"><circle cx="5" cy="5" r="4" fill="none" stroke="#707070" stroke-width="1.2"/></svg>
<div style="left:30.3px;top:425.5px;height:16px;line-height:16px;font-size:12px;color:#767676;white-space:nowrap;letter-spacing:-0.301px;">Shape Position</div>
<div style="left:177px;top:425.2px;width:94px;height:16px;background:#2a2a2a;border-radius:3px;"></div>
<div style="left:181.5px;top:425.7px;height:16px;line-height:16px;font-size:12px;color:#767676;white-space:nowrap;">X</div>
<div style="left:194px;top:425.7px;height:16px;line-height:16px;font-size:12px;color:#dcdcdc;white-space:nowrap;letter-spacing:-0.227px;">0.0</div>
<div style="left:277px;top:425.2px;width:93.5px;height:16px;background:#2a2a2a;border-radius:3px;"></div>
<div style="left:281.5px;top:425.7px;height:16px;line-height:16px;font-size:12px;color:#767676;white-space:nowrap;">Y</div>
<div style="left:294px;top:425.7px;height:16px;line-height:16px;font-size:12px;color:#dcdcdc;white-space:nowrap;letter-spacing:-0.227px;">0.0</div>
<svg style="left:14px;top:450px;" width="10" height="10" viewBox="0 0 10 10"><circle cx="5" cy="5" r="4" fill="none" stroke="#707070" stroke-width="1.2"/></svg>
<div style="left:30.3px;top:447.5px;height:16px;line-height:16px;font-size:12px;color:#e4e4e4;white-space:nowrap;letter-spacing:-0.230px;">Shape Rotation</div>
<div style="left:177px;top:447.2px;width:94px;height:16px;background:#2a2a2a;border-radius:3px;"></div>
<div style="left:181.5px;top:448.7px;height:14px;line-height:14px;font-size:11px;color:#6a6a6a;white-space:nowrap;">#</div>
<div style="left:194px;top:447.7px;height:16px;line-height:16px;font-size:12px;color:#dcdcdc;white-space:nowrap;letter-spacing:-0.227px;">0.0</div>
<svg style="left:14px;top:472px;" width="10" height="10" viewBox="0 0 10 10"><circle cx="5" cy="5" r="4" fill="none" stroke="#707070" stroke-width="1.2"/></svg>
<div style="left:30.3px;top:469.5px;height:16px;line-height:16px;font-size:12px;color:#767676;white-space:nowrap;letter-spacing:-0.641px;">Shape Scale</div>
<div style="left:177px;top:469.2px;width:94px;height:16px;background:#2a2a2a;border-radius:3px;"></div>
<div style="left:181.5px;top:469.7px;height:16px;line-height:16px;font-size:12px;color:#767676;white-space:nowrap;">X</div>
<div style="left:194px;top:469.7px;height:16px;line-height:16px;font-size:12px;color:#dcdcdc;white-space:nowrap;letter-spacing:-0.227px;">1.0</div>
<div style="left:277px;top:469.2px;width:93.5px;height:16px;background:#2a2a2a;border-radius:3px;"></div>
<div style="left:281.5px;top:469.7px;height:16px;line-height:16px;font-size:12px;color:#767676;white-space:nowrap;">Y</div>
<div style="left:294px;top:469.7px;height:16px;line-height:16px;font-size:12px;color:#dcdcdc;white-space:nowrap;letter-spacing:-0.227px;">1.0</div>
<div style="left:378px;top:469.5px;width:14.5px;height:16px;background:#2b2b2b;border-radius:4px;border:1px solid #1d1d1d;box-sizing:border-box;border-top-color:#5e5e5e;"></div>
<svg style="left:378px;top:469.5px;" width="14.5" height="16" viewBox="0 0 14.5 16"><path d="M4.5 6 V5 A2.75 2.75 0 0 1 10 5 V6 M4.5 10 V11 A2.75 2.75 0 0 0 10 11 V10" fill="none" stroke="#c8c8c8" stroke-width="1.2"/></svg>
<svg style="left:14px;top:494px;" width="10" height="10" viewBox="0 0 10 10"><circle cx="5" cy="5" r="4" fill="none" stroke="#707070" stroke-width="1.2"/></svg>
<div style="left:30.3px;top:491.5px;height:16px;line-height:16px;font-size:12px;color:#767676;white-space:nowrap;letter-spacing:-0.587px;">Shape Skew</div>
<div style="left:177px;top:491.2px;width:94px;height:16px;background:#2a2a2a;border-radius:3px;"></div>
<div style="left:181.5px;top:491.7px;height:16px;line-height:16px;font-size:12px;color:#767676;white-space:nowrap;">X</div>
<div style="left:194px;top:491.7px;height:16px;line-height:16px;font-size:12px;color:#dcdcdc;white-space:nowrap;letter-spacing:-0.227px;">0.0</div>
<div style="left:277px;top:491.2px;width:93.5px;height:16px;background:#2a2a2a;border-radius:3px;"></div>
<div style="left:281.5px;top:491.7px;height:16px;line-height:16px;font-size:12px;color:#767676;white-space:nowrap;">Y</div>
<div style="left:294px;top:491.7px;height:16px;line-height:16px;font-size:12px;color:#dcdcdc;white-space:nowrap;letter-spacing:-0.227px;">0.0</div>
<svg style="left:14px;top:516px;" width="10" height="10" viewBox="0 0 10 10"><circle cx="5" cy="5" r="4" fill="none" stroke="#707070" stroke-width="1.2"/></svg>
<div style="left:30.3px;top:513.5px;height:16px;line-height:16px;font-size:12px;color:#e4e4e4;white-space:nowrap;letter-spacing:-0.072px;">Shape Visibility</div>
<div style="left:177px;top:513.5px;width:16px;height:16px;background:#2a2a2a;border-radius:3px;"></div>
<svg style="left:177px;top:513.5px;" width="16" height="16" viewBox="0 0 16 16"><path d="M3.2 8.6 L6.6 12 L13 3.8" fill="none" stroke="#35c96b" stroke-width="2.2" stroke-linecap="round" stroke-linejoin="round"/></svg>
<svg style="left:14px;top:538px;" width="10" height="10" viewBox="0 0 10 10"><circle cx="5" cy="5" r="4" fill="none" stroke="#707070" stroke-width="1.2"/></svg>
<div style="left:30.3px;top:535.5px;height:16px;line-height:16px;font-size:12px;color:#e4e4e4;white-space:nowrap;letter-spacing:-0.247px;">Shape Opacity</div>
<div style="left:177px;top:541.5px;width:189px;height:3.5px;background:#e4e4e4;border-radius:2px;"></div>
<div style="left:360.5px;top:538px;width:10px;height:10px;background:#6fc9aa;border-radius:5px;"></div>
<div style="left:363.5px;top:541px;width:4px;height:4px;background:#4d9c80;border-radius:2px;"></div>
<div style="left:377px;top:535.5px;width:94px;height:16px;background:#2a2a2a;border-radius:3px;"></div>
<div style="left:381px;top:536.5px;height:15px;line-height:15px;font-size:11.5px;color:#6a6a6a;white-space:nowrap;">%</div>
<div style="left:394.5px;top:536px;height:16px;line-height:16px;font-size:12px;color:#dcdcdc;white-space:nowrap;letter-spacing:-0.105px;">100.0</div>
<svg style="left:14px;top:560px;" width="10" height="10" viewBox="0 0 10 10"><circle cx="5" cy="5" r="4" fill="none" stroke="#707070" stroke-width="1.2"/></svg>
<div style="left:30.3px;top:557.5px;height:16px;line-height:16px;font-size:12px;color:#e4e4e4;white-space:nowrap;letter-spacing:-0.004px;">Auto Id</div>
<div style="left:177px;top:557.5px;width:16px;height:16px;background:#2a2a2a;border-radius:3px;"></div>
<svg style="left:177px;top:557.5px;" width="16" height="16" viewBox="0 0 16 16"><path d="M3.2 8.6 L6.6 12 L13 3.8" fill="none" stroke="#35c96b" stroke-width="2.2" stroke-linecap="round" stroke-linejoin="round"/></svg>
<svg style="left:14px;top:582px;" width="10" height="10" viewBox="0 0 10 10"><circle cx="5" cy="5" r="4" fill="none" stroke="#707070" stroke-width="1.2"/></svg>
<div style="left:30.3px;top:579.5px;height:16px;line-height:16px;font-size:12px;color:#767676;white-space:nowrap;letter-spacing:-0.505px;">Shape Id</div>
<div style="left:177px;top:579.2px;width:94px;height:16px;background:#303030;border-radius:3px;"></div>
<div style="left:181.5px;top:580.7px;height:14px;line-height:14px;font-size:11px;color:#555;white-space:nowrap;">#</div>
<div style="left:194px;top:579.7px;height:16px;line-height:16px;font-size:12px;color:#8a8a8a;white-space:nowrap;">0</div>
<svg style="left:14px;top:604px;" width="10" height="10" viewBox="0 0 10 10"><circle cx="5" cy="5" r="4" fill="none" stroke="#707070" stroke-width="1.2"/></svg>
<div style="left:30.3px;top:601.5px;height:16px;line-height:16px;font-size:12px;color:#e4e4e4;white-space:nowrap;letter-spacing:-0.186px;">Shape Time Offset</div>
<div style="left:177px;top:601.2px;width:94px;height:16px;background:#2a2a2a;border-radius:3px;"></div>
<div style="left:181.5px;top:602.7px;height:14px;line-height:14px;font-size:11px;color:#6a6a6a;white-space:nowrap;">#</div>
<div style="left:194px;top:601.7px;height:16px;line-height:16px;font-size:12px;color:#dcdcdc;white-space:nowrap;letter-spacing:-0.227px;">0.0</div>
<div style="left:6px;top:624px;width:468.5px;height:23px;background:#3a3a3a;"></div>
<div style="left:6px;top:624px;width:468.5px;height:1.5px;background:#c8f06e;"></div>
<div style="left:6px;top:624px;width:4px;height:23px;background:#c8f06e;"></div>
<div style="left:470.5px;top:624px;width:4px;height:23px;background:#c8f06e;"></div>
<svg style="left:14.5px;top:634px;" width="9" height="5" viewBox="0 0 9 5"><path d="M0.5 0.5 L4.5 4.5 L8.5 0.5" fill="none" stroke="#a0a0a0" stroke-width="1.2"/></svg>
<div style="left:28px;top:627px;width:18px;height:18px;background:#2a2a2a;border-radius:3px;"></div>
<svg style="left:30px;top:629px;" width="14" height="14" viewBox="0 0 14 14"><path d="M12 7 A5 5 0 1 1 9.5 2.7" fill="none" stroke="#d0d0d0" stroke-width="1.3"/><path d="M4.6 6.6 L6.8 9 L12 3.2" fill="none" stroke="#d0d0d0" stroke-width="1.4"/></svg>
<svg style="left:50px;top:631px;" width="10" height="10" viewBox="0 0 10 10"><circle cx="5" cy="5" r="4" fill="none" stroke="#707070" stroke-width="1.2"/></svg>
<svg style="left:64px;top:632px;" width="18" height="10" viewBox="0 0 18 10"><path d="M0.3 5.5 L2.2 1.6 Q3 0.2 3.8 1.6 L6.6 8.4 Q7.4 9.8 8.2 8.4 L10.6 1.6 Q11.4 0.2 12.2 1.6 L15 8.4 Q15.8 9.8 16.6 8.4 L17.7 6" fill="none" stroke="#86d98a" stroke-width="1.2"/></svg>
<div style="left:87.5px;top:628.5px;height:16px;line-height:16px;font-size:12px;color:#dcdcdc;white-space:nowrap;letter-spacing:-0.103px;">Oscillator [Position.X] Sine</div>
<div style="left:365.5px;top:627.5px;width:17px;height:17.5px;background:#2b2b2b;border-radius:4px;border:1px solid #1d1d1d;box-sizing:border-box;border-top-color:#5e5e5e;"></div>
<svg style="left:365.5px;top:627.5px;" width="17" height="17.5" viewBox="0 0 17 17.5"><path d="M3 5.5 H8 M3 12 H8 M9 8.7 H14" stroke="#e8e8e8" stroke-width="1.6"/><path d="M8 5.5 V12" stroke="#e8e8e8" stroke-width="1"/><path d="M14.9 11.9 V14.9 H11.9 Z" fill="#62d3a4"/></svg>
<div style="left:386.5px;top:627.5px;width:20px;height:17.5px;background:#2f2f2f;border-radius:4px;"></div>
<svg style="left:388.5px;top:632.5px;" width="7" height="7" viewBox="0 0 7 7"><path d="M0.3 3.5 L3 0.5 H6.5 V6.5 H3 Z" fill="#d8b95a"/></svg>
<svg style="left:398px;top:632.5px;" width="7" height="7" viewBox="0 0 7 7"><path d="M6.7 3.5 L4 0.5 H0.5 V6.5 H4 Z" fill="#c653e8"/></svg>
<div style="left:410px;top:627.5px;width:17px;height:17.5px;background:#2b2b2b;border-radius:4px;border:1px solid #1d1d1d;box-sizing:border-box;border-top-color:#5e5e5e;"></div>
<svg style="left:410px;top:627.5px;" width="17" height="17.5" viewBox="0 0 17 17.5"><path d="M6 3 H11 L10.5 8 L12.5 10.5 H4.5 L6.5 8 Z" fill="#e0e0e0"/><path d="M8.5 10.5 V15" stroke="#e0e0e0" stroke-width="1.2"/></svg>
<div style="left:430.5px;top:627.5px;width:17px;height:17.5px;background:#2b2b2b;border-radius:4px;border:1px solid #1d1d1d;box-sizing:border-box;border-top-color:#5e5e5e;"></div>
<svg style="left:430.5px;top:627.5px;" width="17" height="17.5" viewBox="0 0 17 17.5"><path d="M10 7 L11 10 L14 11 L11 12 L10 15 L9 12 L6 11 L9 10 Z" fill="#e0e0e0"/><g fill="#c8c8c8"><rect x="3" y="3" width="1.6" height="1.6"/><rect x="7" y="2.5" width="1.6" height="1.6"/><rect x="11.5" y="4" width="1.6" height="1.6"/><rect x="3.5" y="8" width="1.6" height="1.6"/></g><path d="M14.9 11.9 V14.9 H11.9 Z" fill="#62d3a4"/></svg>
<div style="left:450.5px;top:627.5px;width:17px;height:17.5px;background:#2b2b2b;border-radius:4px;border:1px solid #1d1d1d;box-sizing:border-box;border-top-color:#5e5e5e;"></div>
<svg style="left:450.5px;top:627.5px;" width="17" height="17.5" viewBox="0 0 17 17.5"><path d="M4.5 4.7 L12.5 12.7 M12.5 4.7 L4.5 12.7" stroke="#d0d0d0" stroke-width="1.1"/></svg>
<div style="left:6px;top:647px;width:468.5px;height:22px;background:#2b2b2b;"></div>
<div style="left:184px;top:649px;width:96px;height:20px;background:#464646;border-radius:4px 4px 0 0;"></div>
<div style="left:205.5px;top:651px;height:16px;line-height:16px;font-size:12px;color:#dcdcdc;white-space:nowrap;letter-spacing:-0.115px;">Behaviour</div>
<div style="left:302.5px;top:651px;height:16px;line-height:16px;font-size:12px;color:#a0a0a0;white-space:nowrap;letter-spacing:0.124px;">Deformer</div>
<div style="left:376.3px;top:654px;width:1px;height:11px;background:#909090;"></div>
<div style="left:404.5px;top:651px;height:16px;line-height:16px;font-size:12px;color:#a0a0a0;white-space:nowrap;letter-spacing:0.068px;">Falloffs</div>
<div style="left:7px;top:669px;width:467px;height:83px;background:#3a3a3a;"></div>
<div style="left:11px;top:673px;width:458px;height:76px;background:#1c1c1c;background-image:repeating-linear-gradient(90deg,#1c1c1c 0,#1c1c1c 8px,#2c2c2c 8px,#2c2c2c 10px);background-position:1.8px 0;"></div>
<svg style="left:11px;top:673px;" width="458" height="76" viewBox="0 0 458 76"><path d="M0 37.7 H458" stroke="#4a6fd0" stroke-width="1.6" fill="none"/><path d="M0 37.7 L3 33.8 L6 30.0 L9 26.3 L12 22.8 L15 19.5 L18 16.5 L21 13.8 L24 11.5 L27 9.7 L30 8.2 L33 7.2 L36 6.8 L39 6.8 L42 7.2 L45 8.2 L48 9.7 L51 11.5 L54 13.8 L57 16.5 L60 19.5 L63 22.8 L66 26.3 L69 30.0 L72 33.8 L75 37.7 L78 41.6 L81 45.4 L84 49.1 L87 52.6 L90 55.9 L93 58.9 L96 61.6 L99 63.9 L102 65.7 L105 67.2 L108 68.2 L111 68.6 L114 68.6 L117 68.2 L120 67.2 L123 65.7 L126 63.9 L129 61.6 L132 58.9 L135 55.9 L138 52.6 L141 49.1 L144 45.4 L147 41.6 L150 37.7 L153 33.8 L156 30.0 L159 26.3 L162 22.8 L165 19.5 L168 16.5 L171 13.8 L174 11.5 L177 9.7 L180 8.2 L183 7.2 L186 6.8 L189 6.8 L192 7.2 L195 8.2 L198 9.7 L201 11.5 L204 13.8 L207 16.5 L210 19.5 L213 22.8 L216 26.3 L219 30.0 L222 33.8 L225 37.7 L228 41.6 L231 45.4 L234 49.1 L237 52.6 L240 55.9 L243 58.9 L246 61.6 L249 63.9 L252 65.7 L255 67.2 L258 68.2 L261 68.6 L264 68.6 L267 68.2 L270 67.2 L273 65.7 L276 63.9 L279 61.6 L282 58.9 L285 55.9 L288 52.6 L291 49.1 L294 45.4 L297 41.6 L300 37.7 L303 33.8 L306 30.0 L309 26.3 L312 22.8 L315 19.5 L318 16.5 L321 13.8 L324 11.5 L327 9.7 L330 8.2 L333 7.2 L336 6.8 L339 6.8 L342 7.2 L345 8.2 L348 9.7 L351 11.5 L354 13.8 L357 16.5 L360 19.5 L363 22.8 L366 26.3 L369 30.0 L372 33.8 L375 37.7 L378 41.6 L381 45.4 L384 49.1 L387 52.6 L390 55.9 L393 58.9 L396 61.6 L399 63.9 L402 65.7 L405 67.2 L408 68.2 L411 68.6 L414 68.6 L417 68.2 L420 67.2 L423 65.7 L426 63.9 L429 61.6 L432 58.9 L435 55.9 L438 52.6 L441 49.1 L444 45.4 L447 41.6 L450 37.7 L453 33.8 L456 30.0" fill="none" stroke="#d8d8d8" stroke-width="1.1"/></svg>
<svg style="left:14px;top:759.5px;" width="10" height="10" viewBox="0 0 10 10"><circle cx="5" cy="5" r="4" fill="none" stroke="#707070" stroke-width="1.2"/></svg>
<div style="left:30.3px;top:757px;height:16px;line-height:16px;font-size:12px;color:#e4e4e4;white-space:nowrap;letter-spacing:0.018px;">Strength</div>
<div style="left:177px;top:757px;width:94px;height:16px;background:#2a2a2a;border-radius:3px;"></div>
<div style="left:181px;top:758px;height:15px;line-height:15px;font-size:11.5px;color:#6a6a6a;white-space:nowrap;">%</div>
<div style="left:194.5px;top:757.5px;height:16px;line-height:16px;font-size:12px;color:#dcdcdc;white-space:nowrap;letter-spacing:-0.105px;">100.0</div>
<svg style="left:14px;top:781.5px;" width="10" height="10" viewBox="0 0 10 10"><circle cx="5" cy="5" r="4" fill="none" stroke="#707070" stroke-width="1.2"/></svg>
<div style="left:30.3px;top:779px;height:16px;line-height:16px;font-size:12px;color:#e4e4e4;white-space:nowrap;letter-spacing:-0.154px;">Strength Fades to Zero</div>
<div style="left:177px;top:778.5px;width:16px;height:16px;background:#2a2a2a;border-radius:3px;"></div>
<svg style="left:177px;top:778.5px;" width="16" height="16" viewBox="0 0 16 16"><path d="M3.2 8.6 L6.6 12 L13 3.8" fill="none" stroke="#35c96b" stroke-width="2.2" stroke-linecap="round" stroke-linejoin="round"/></svg>
<svg style="left:14px;top:803.5px;" width="10" height="10" viewBox="0 0 10 10"><circle cx="5" cy="5" r="4" fill="none" stroke="#707070" stroke-width="1.2"/></svg>
<div style="left:30.3px;top:801px;height:16px;line-height:16px;font-size:12px;color:#e4e4e4;white-space:nowrap;letter-spacing:-0.253px;">Type</div>
<div style="left:178px;top:801.25px;width:192px;height:14.5px;background:#4a4a4a;border-radius:3px;"></div>
<div style="left:181px;top:801px;height:16px;line-height:16px;font-size:12px;color:#dcdcdc;white-space:nowrap;letter-spacing:-0.504px;">Sine</div>
<svg style="left:357px;top:806.5px;" width="9" height="5" viewBox="0 0 9 5"><path d="M0.5 0.5 L4.5 4.5 L8.5 0.5" fill="none" stroke="#c8c8c8" stroke-width="1.2"/></svg>
<svg style="left:14px;top:825.5px;" width="10" height="10" viewBox="0 0 10 10"><circle cx="5" cy="5" r="4" fill="none" stroke="#707070" stroke-width="1.2"/></svg>
<div style="left:30.3px;top:823px;height:16px;line-height:16px;font-size:12px;color:#e4e4e4;white-space:nowrap;letter-spacing:-0.224px;">Wave Style</div>
<div style="left:178px;top:823.25px;width:192px;height:14.5px;background:#4a4a4a;border-radius:3px;"></div>
<div style="left:181px;top:823px;height:16px;line-height:16px;font-size:12px;color:#dcdcdc;white-space:nowrap;letter-spacing:0.138px;">Normal</div>
<svg style="left:357px;top:828.5px;" width="9" height="5" viewBox="0 0 9 5"><path d="M0.5 0.5 L4.5 4.5 L8.5 0.5" fill="none" stroke="#c8c8c8" stroke-width="1.2"/></svg>
<div style="left:30.3px;top:845px;height:16px;line-height:16px;font-size:12px;color:#8e8e8e;white-space:nowrap;letter-spacing:-0.270px;">Graph</div>
<div style="left:178px;top:844.5px;width:16px;height:16px;background:#464646;border-radius:3px;border:1px solid #3a3a3a;box-sizing:border-box;"></div>
<svg style="left:178px;top:844.5px;" width="16" height="16" viewBox="0 0 16 16"><path d="M4 3 V14 M2 12 H13.5 M4 12 L12.5 4.5" fill="none" stroke="#d0d0d0" stroke-width="1"/></svg>
<div style="left:7.5px;top:865px;width:466.5px;height:1px;background:#222;"></div>
<svg style="left:14px;top:874.5px;" width="10" height="10" viewBox="0 0 10 10"><circle cx="5" cy="5" r="4" fill="none" stroke="#707070" stroke-width="1.2"/></svg>
<div style="left:30.3px;top:872px;height:16px;line-height:16px;font-size:12px;color:#e4e4e4;white-space:nowrap;letter-spacing:0.191px;">Minimum</div>
<div style="left:177px;top:871.3px;width:94px;height:16px;background:#2a2a2a;border-radius:3px;"></div>
<div style="left:181.5px;top:872.8px;height:14px;line-height:14px;font-size:11px;color:#6a6a6a;white-space:nowrap;">#</div>
<div style="left:194px;top:871.8px;height:16px;line-height:16px;font-size:12px;color:#dcdcdc;white-space:nowrap;letter-spacing:-0.004px;">-400.0</div>
<div style="left:261px;top:871.3px;width:10px;height:16px;background:#303030;border-radius:0 3px 3px 0;"></div>
<svg style="left:262.5px;top:875.5px;" width="7" height="7" viewBox="0 0 7 7"><path d="M6.7 3.5 L4 0.5 H0.5 V6.5 H4 Z" fill="#c653e8"/></svg>
<svg style="left:14px;top:896.5px;" width="10" height="10" viewBox="0 0 10 10"><circle cx="5" cy="5" r="4" fill="none" stroke="#707070" stroke-width="1.2"/></svg>
<div style="left:30.3px;top:894px;height:16px;line-height:16px;font-size:12px;color:#e4e4e4;white-space:nowrap;letter-spacing:0.000px;">Maximum</div>
<div style="left:153px;top:893px;width:15.5px;height:16px;background:#2e2e2e;border-radius:3px;"></div>
<div style="left:157.5px;top:895px;height:14px;line-height:14px;font-size:11px;color:#e0e0e0;white-space:nowrap;font-weight:bold;">π</div>
<div style="left:177px;top:893.3px;width:94px;height:16px;background:#2a2a2a;border-radius:3px;"></div>
<div style="left:181.5px;top:894.8px;height:14px;line-height:14px;font-size:11px;color:#6a6a6a;white-space:nowrap;">#</div>
<div style="left:194px;top:893.8px;height:16px;line-height:16px;font-size:12px;color:#c4b25a;white-space:nowrap;letter-spacing:-0.005px;">400.0</div>
<div style="left:261px;top:893.3px;width:10px;height:16px;background:#303030;border-radius:0 3px 3px 0;"></div>
<svg style="left:250.5px;top:897.5px;" width="7" height="7" viewBox="0 0 7 7"><path d="M0.3 3.5 L3 0.5 H6.5 V6.5 H3 Z" fill="#cdb662"/></svg>
<svg style="left:262.5px;top:897.5px;" width="7" height="7" viewBox="0 0 7 7"><path d="M6.7 3.5 L4 0.5 H0.5 V6.5 H4 Z" fill="#c653e8"/></svg>
<svg style="left:14px;top:918.5px;" width="10" height="10" viewBox="0 0 10 10"><circle cx="5" cy="5" r="4" fill="none" stroke="#707070" stroke-width="1.2"/></svg>
<div style="left:30.3px;top:916px;height:16px;line-height:16px;font-size:12px;color:#e4e4e4;white-space:nowrap;letter-spacing:0.006px;">Value Offset</div>
<div style="left:177px;top:915.3px;width:94px;height:16px;background:#2a2a2a;border-radius:3px;"></div>
<div style="left:181.5px;top:916.8px;height:14px;line-height:14px;font-size:11px;color:#6a6a6a;white-space:nowrap;">#</div>
<div style="left:194px;top:915.8px;height:16px;line-height:16px;font-size:12px;color:#dcdcdc;white-space:nowrap;letter-spacing:-0.227px;">0.0</div>
<svg style="left:14px;top:940.5px;" width="10" height="10" viewBox="0 0 10 10"><circle cx="5" cy="5" r="4" fill="none" stroke="#707070" stroke-width="1.2"/></svg>
<div style="left:30.3px;top:938px;height:16px;line-height:16px;font-size:12px;color:#e4e4e4;white-space:nowrap;letter-spacing:-0.289px;">Stagger</div>
<div style="left:177px;top:937.3px;width:94px;height:16px;background:#2a2a2a;border-radius:3px;"></div>
<div style="left:181.5px;top:938.8px;height:14px;line-height:14px;font-size:11px;color:#6a6a6a;white-space:nowrap;">#</div>
<div style="left:194px;top:937.8px;height:16px;line-height:16px;font-size:12px;color:#dcdcdc;white-space:nowrap;letter-spacing:-0.227px;">0.0</div>
<svg style="left:14px;top:962.5px;" width="10" height="10" viewBox="0 0 10 10"><circle cx="5" cy="5" r="4" fill="none" stroke="#707070" stroke-width="1.2"/></svg>
<div style="left:30.3px;top:960px;height:16px;line-height:16px;font-size:12px;color:#e4e4e4;white-space:nowrap;letter-spacing:-0.308px;">Separate Channels</div>
<div style="left:177px;top:959.5px;width:16px;height:16px;background:#2a2a2a;border-radius:3px;"></div>
<div style="left:7.5px;top:980px;width:466.5px;height:1px;background:#222;"></div>
<svg style="left:14px;top:989.5px;" width="10" height="10" viewBox="0 0 10 10"><circle cx="5" cy="5" r="4" fill="none" stroke="#707070" stroke-width="1.2"/></svg>
<div style="left:30.3px;top:987px;height:16px;line-height:16px;font-size:12px;color:#e4e4e4;white-space:nowrap;letter-spacing:-0.063px;">Time Mode</div>
<div style="left:178px;top:987.25px;width:192px;height:14.5px;background:#4a4a4a;border-radius:3px;"></div>
<div style="left:181px;top:987px;height:16px;line-height:16px;font-size:12px;color:#dcdcdc;white-space:nowrap;letter-spacing:-0.065px;">Minutes (BPM)</div>
<svg style="left:357px;top:992.5px;" width="9" height="5" viewBox="0 0 9 5"><path d="M0.5 0.5 L4.5 4.5 L8.5 0.5" fill="none" stroke="#c8c8c8" stroke-width="1.2"/></svg>
<svg style="left:14px;top:1011.5px;" width="10" height="10" viewBox="0 0 10 10"><circle cx="5" cy="5" r="4" fill="none" stroke="#707070" stroke-width="1.2"/></svg>
<div style="left:30.3px;top:1009px;height:16px;line-height:16px;font-size:12px;color:#e4e4e4;white-space:nowrap;letter-spacing:-0.188px;">Frequency</div>
<div style="left:177px;top:1008.3px;width:94px;height:16px;background:#2a2a2a;border-radius:3px;"></div>
<div style="left:181.5px;top:1009.8px;height:14px;line-height:14px;font-size:11px;color:#6a6a6a;white-space:nowrap;">#</div>
<div style="left:194px;top:1008.8px;height:16px;line-height:16px;font-size:12px;color:#dcdcdc;white-space:nowrap;letter-spacing:-0.338px;">10.0</div>
<div style="left:22px;top:391px;width:376px;height:28.5px;border:3px solid #b5e61d;box-sizing:border-box;"></div>
<div style="left:4px;top:908px;width:301px;height:28px;border:3px solid #b5e61d;box-sizing:border-box;"></div>
<svg style="left:138px;top:444px;" width="34" height="50" viewBox="0 0 34 50"><path d="M9.5 2.3 H24 V24.5 H30 L16.7 47 L2.6 24.5 H9.5 Z" fill="none" stroke="#b5e61d" stroke-width="2.4" stroke-linejoin="miter"/></svg>
<svg style="left:0px;top:0px;" width="500" height="1029" viewBox="0 0 500 1029"><path d="M184.0 404.0 C184.6 404.8 186.5 406.7 187.6 408.5 C188.7 410.3 189.7 410.9 190.8 415.0 C191.9 419.1 192.9 426.3 194.0 433.0 C195.1 439.7 196.6 447.7 197.5 455.0 C198.4 462.3 198.6 469.5 199.2 477.0 C199.8 484.5 200.4 492.8 200.8 500.0 C201.2 507.2 201.3 509.2 201.7 520.0 C202.1 530.8 202.7 550.0 203.2 565.0 C203.7 580.0 204.1 598.0 204.7 610.0 C205.3 622.0 206.3 622.0 207.0 637.0 C207.7 652.0 208.3 677.8 209.0 700.0 C209.7 722.2 210.4 752.0 211.0 770.0 C211.6 788.0 212.1 798.0 212.7 808.0 C213.3 818.0 213.9 821.0 214.6 830.0 C215.3 839.0 216.3 853.0 217.0 862.0 C217.7 871.0 218.1 877.3 219.0 884.0 C219.9 890.7 221.5 897.0 222.7 902.0 C223.9 907.0 224.6 910.2 226.0 914.0 C227.4 917.8 230.2 922.8 231.0 924.5" fill="none" stroke="#3a9ad4" stroke-width="1.3"/><circle cx="184" cy="404.3" r="4.6" fill="#3daef5"/><circle cx="231" cy="925" r="4.6" fill="#3daef5"/></svg>
</body></html>
